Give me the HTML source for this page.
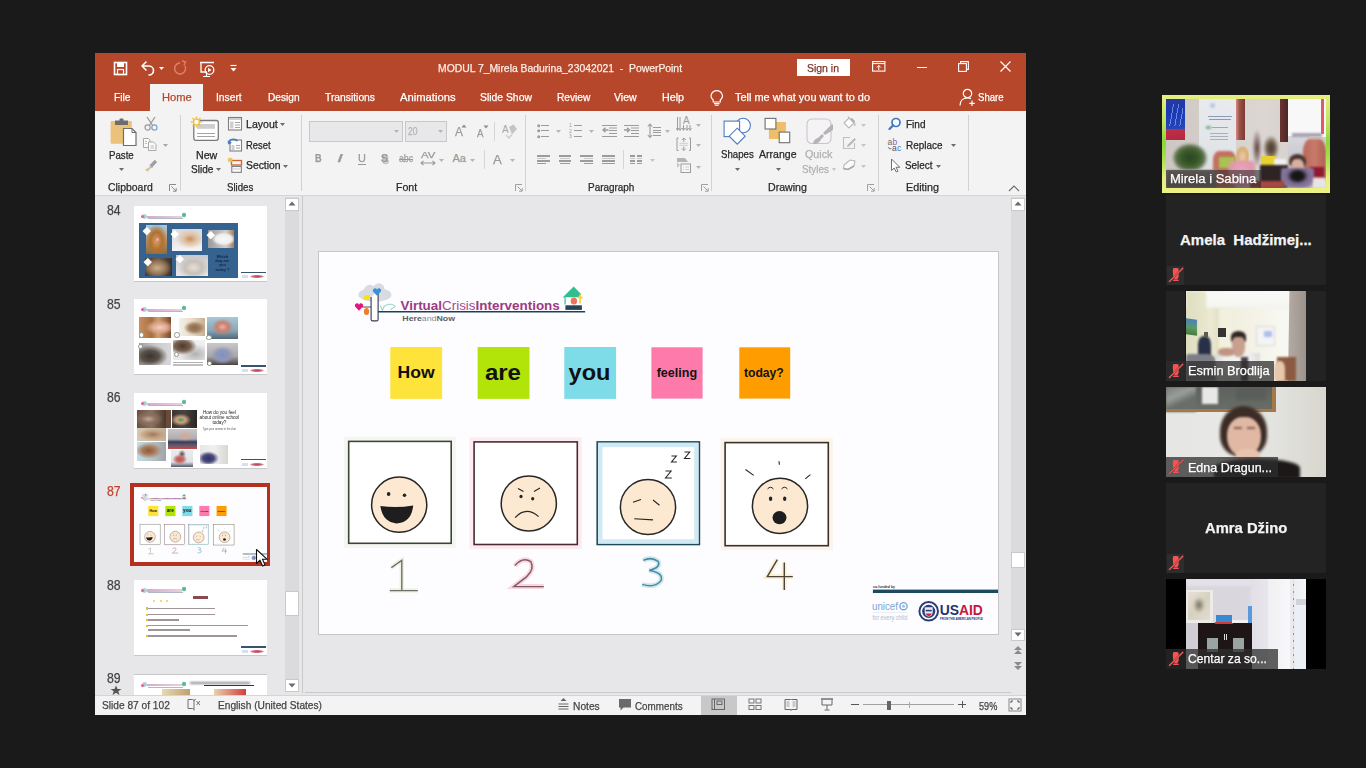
<!DOCTYPE html>
<html><head><meta charset="utf-8"><title>PowerPoint - Zoom</title>
<style>
html,body{margin:0;padding:0;width:1366px;height:768px;overflow:hidden;background:#1a1a1a;font-family:'Liberation Sans', sans-serif;}
[id^=t]{-webkit-text-stroke:0.25px currentColor;}
</style></head><body>
<div style="position:absolute;left:95px;top:53px;width:931px;height:58px;background:#b7472a;"></div>
<div style="position:absolute;left:95px;top:111px;width:931px;height:84px;background:#f3f3f3;"></div>
<div style="position:absolute;left:95px;top:195px;width:931px;height:1px;background:#d5d5d5;"></div>
<div style="position:absolute;left:95px;top:196px;width:931px;height:499px;background:#e7e6e9;"></div>
<div style="position:absolute;left:95px;top:695px;width:931px;height:20px;background:#f3f3f3;border-top:1px solid #d4d4d4;box-sizing:border-box;"></div>
<div style="position:absolute;left:150px;top:84px;width:53px;height:27px;background:#f3f3f3;"></div>
<svg style="position:absolute;left:112px;top:60px;" width="18" height="18" viewBox="0 0 18 18"><rect x="2.5" y="2.5" width="12" height="12" fill="none" stroke="#fff" stroke-width="1.6"/><rect x="5" y="2.5" width="7" height="4.5" fill="#fff"/><rect x="5.5" y="9.5" width="6" height="5" fill="none" stroke="#fff" stroke-width="1.2"/></svg>
<svg style="position:absolute;left:139px;top:59px;" width="28" height="18" viewBox="0 0 28 18"><path d="M3 7 L7 3 M3 7 L7 11 M3 7 H10 A4.5 4.5 0 0 1 10 16" fill="none" stroke="#fff" stroke-width="1.6" stroke-linecap="round" stroke-linejoin="round"/><path d="M20 8 L25 8 L22.5 11 Z" fill="#fff"/></svg>
<svg style="position:absolute;left:171px;top:59px;" width="18" height="18" viewBox="0 0 18 18"><path d="M9 4 A5.5 5.5 0 1 0 14 7" fill="none" stroke="#d9826a" stroke-width="1.5"/><path d="M11 2 L14.5 3 L13 6.5" fill="none" stroke="#d9826a" stroke-width="1.4"/></svg>
<svg style="position:absolute;left:198px;top:59px;" width="20" height="20" viewBox="0 0 20 20"><path d="M2 3.5 H16" stroke="#fff" stroke-width="1.5"/><path d="M3 4 V13 H9" fill="none" stroke="#fff" stroke-width="1.3"/><circle cx="11.5" cy="11" r="4.3" fill="none" stroke="#fff" stroke-width="1.3"/><path d="M10 8.8 L13.6 11 L10 13.2 Z" fill="#fff"/><path d="M5 17.5 H12 M8.5 13 V17" stroke="#fff" stroke-width="1.2"/></svg>
<svg style="position:absolute;left:229px;top:64px;" width="10" height="10" viewBox="0 0 10 10"><path d="M1.5 1.5 H7.5" stroke="#fff" stroke-width="1.2"/><path d="M1.5 4 H7.5 L4.5 7.5 Z" fill="#fff"/></svg>
<div id="t0" style="position:absolute;left:438px;top:62.65px;font:400 11px/1 'Liberation Sans', sans-serif;color:#fbeee9;white-space:nowrap;transform-origin:0 0;transform:scaleX(0.9427);">MODUL 7_Mirela Badurina_23042021&nbsp; -&nbsp; PowerPoint</div>
<svg style="position:absolute;left:872px;top:61px;" width="14" height="11" viewBox="0 0 14 11"><rect x="0.6" y="0.6" width="12.3" height="9.5" fill="none" stroke="#fff" stroke-width="1.1"/><path d="M0.6 2.6 H12.9" stroke="#fff" stroke-width="1"/><path d="M6.8 9 V4.5 M4.8 6.5 L6.8 4.5 L8.8 6.5" fill="none" stroke="#fff" stroke-width="1"/></svg>
<div style="position:absolute;left:917px;top:67px;width:10px;height:1.1px;background:#fff;"></div>
<svg style="position:absolute;left:958px;top:61px;" width="12" height="11" viewBox="0 0 12 11"><rect x="0.6" y="2.6" width="7.8" height="7.8" fill="none" stroke="#fff" stroke-width="1.1"/><path d="M2.6 2.6 V0.6 H10.4 V8.4 H8.4" fill="none" stroke="#fff" stroke-width="1.1"/></svg>
<svg style="position:absolute;left:1000px;top:61px;" width="11" height="11" viewBox="0 0 11 11"><path d="M0.5 0.5 L10.5 10.5 M10.5 0.5 L0.5 10.5" stroke="#fff" stroke-width="1.2"/></svg>
<div style="position:absolute;left:797px;top:58.6px;width:53px;height:17px;background:#fff;"></div>
<div id="t1" style="position:absolute;left:807.2px;top:62.65px;font:400 11px/1 'Liberation Sans', sans-serif;color:#7d3429;white-space:nowrap;transform-origin:0 0;transform:scaleX(0.9512);">Sign in</div>
<div id="t2" style="position:absolute;left:113.6px;top:92.05px;font:400 11px/1 'Liberation Sans', sans-serif;color:#fff;white-space:nowrap;transform-origin:0 0;transform:scaleX(0.9360);">File</div>
<div id="t3" style="position:absolute;left:161.6px;top:92.05px;font:400 11px/1 'Liberation Sans', sans-serif;color:#b7472a;white-space:nowrap;transform-origin:0 0;transform:scaleX(1.0155);">Home</div>
<div id="t4" style="position:absolute;left:216.3px;top:92.05px;font:400 11px/1 'Liberation Sans', sans-serif;color:#fff;white-space:nowrap;transform-origin:0 0;transform:scaleX(0.9340);">Insert</div>
<div id="t5" style="position:absolute;left:267.5px;top:92.05px;font:400 11px/1 'Liberation Sans', sans-serif;color:#fff;white-space:nowrap;transform-origin:0 0;transform:scaleX(0.9226);">Design</div>
<div id="t6" style="position:absolute;left:324.6px;top:92.05px;font:400 11px/1 'Liberation Sans', sans-serif;color:#fff;white-space:nowrap;transform-origin:0 0;transform:scaleX(0.9365);">Transitions</div>
<div id="t7" style="position:absolute;left:399.5px;top:92.05px;font:400 11px/1 'Liberation Sans', sans-serif;color:#fff;white-space:nowrap;transform-origin:0 0;transform:scaleX(1.0198);">Animations</div>
<div id="t8" style="position:absolute;left:479.7px;top:92.05px;font:400 11px/1 'Liberation Sans', sans-serif;color:#fff;white-space:nowrap;transform-origin:0 0;transform:scaleX(0.9428);">Slide Show</div>
<div id="t9" style="position:absolute;left:556.5px;top:92.05px;font:400 11px/1 'Liberation Sans', sans-serif;color:#fff;white-space:nowrap;transform-origin:0 0;transform:scaleX(0.9258);">Review</div>
<div id="t10" style="position:absolute;left:614px;top:92.05px;font:400 11px/1 'Liberation Sans', sans-serif;color:#fff;white-space:nowrap;transform-origin:0 0;transform:scaleX(0.9596);">View</div>
<div id="t11" style="position:absolute;left:661.7px;top:92.05px;font:400 11px/1 'Liberation Sans', sans-serif;color:#fff;white-space:nowrap;transform-origin:0 0;transform:scaleX(0.9768);">Help</div>
<div id="t12" style="position:absolute;left:735.2px;top:92.05px;font:400 11px/1 'Liberation Sans', sans-serif;color:#fff;white-space:nowrap;transform-origin:0 0;transform:scaleX(0.9945);">Tell me what you want to do</div>
<div id="t13" style="position:absolute;left:978.4px;top:92.05px;font:400 11px/1 'Liberation Sans', sans-serif;color:#fff;white-space:nowrap;transform-origin:0 0;transform:scaleX(0.8720);">Share</div>
<svg style="position:absolute;left:709px;top:89px;" width="16" height="18" viewBox="0 0 16 18"><path d="M4.2 11 C2 9 1.8 6.5 2.5 5 A5.8 5.8 0 0 1 13 5 C13.8 6.5 13.5 9 11.3 11 V13 H4.2 Z" fill="none" stroke="#fff" stroke-width="1.2"/><path d="M5 14.6 H10.5 M5.8 16.3 H9.7" stroke="#fff" stroke-width="1.1"/></svg>
<svg style="position:absolute;left:959px;top:88px;" width="17" height="19" viewBox="0 0 17 19"><circle cx="8.5" cy="5.5" r="4.2" fill="none" stroke="#fff" stroke-width="1.2"/><path d="M1 17.5 C1 12.5 4 10 8.5 10 C10 10 11 10.3 12 10.8" fill="none" stroke="#fff" stroke-width="1.2"/><path d="M13 12.5 V18 M10.3 15.3 H15.8" stroke="#fff" stroke-width="1.2"/></svg>
<svg style="position:absolute;left:109px;top:117px;" width="29" height="30" viewBox="0 0 29 30"><rect x="1.6" y="4" width="21.2" height="22.8" rx="1" fill="#eac27a"/><path d="M6 3.5 H19 V8 H6 Z" fill="#6d6d6d"/><rect x="10.5" y="1.5" width="4" height="3" rx="1" fill="#6d6d6d"/><path d="M14.5 11.5 H23 L27 15.5 V28.5 H14.5 Z" fill="#fff" stroke="#6f6f6f" stroke-width="1.2"/><path d="M23 11.5 V15.5 H27" fill="none" stroke="#6f6f6f" stroke-width="1"/></svg>
<div id="t14" style="position:absolute;left:109.1px;top:149.75px;font:400 11px/1 'Liberation Sans', sans-serif;color:#262626;white-space:nowrap;transform-origin:0 0;transform:scaleX(0.8777);">Paste</div>
<svg style="position:absolute;left:118.8px;top:168px;" width="5" height="3" viewBox="0 0 5 3"><path d="M0 0 H5 L2.5 3 Z" fill="#6b6b6b"/></svg>
<svg style="position:absolute;left:143px;top:116px;" width="16" height="15" viewBox="0 0 16 15"><path d="M4 1 L10 10 M12 1 L6 10" stroke="#9a9a9a" stroke-width="1.3"/><circle cx="4.6" cy="11.5" r="2.6" fill="none" stroke="#9a9a9a" stroke-width="1.2"/><circle cx="11.4" cy="11.5" r="2.6" fill="none" stroke="#7aa7cf" stroke-width="1.2"/></svg>
<svg style="position:absolute;left:142px;top:137px;" width="16" height="15" viewBox="0 0 16 15"><path d="M1.5 1.5 H6.5 L8 3 V10.5 H1.5 Z" fill="#fafafa" stroke="#a9a9a9" stroke-width="1"/><path d="M6.5 5 H11.5 L14 7.5 V13.5 H6.5 Z" fill="#fafafa" stroke="#a9a9a9" stroke-width="1"/><path d="M3 4.5 H5 M3 6.5 H5 M8.5 9 H12 M8.5 11 H12" stroke="#b4b4b4" stroke-width="0.9"/></svg>
<svg style="position:absolute;left:163.2px;top:144px;" width="5" height="3" viewBox="0 0 5 3"><path d="M0 0 H5 L2.5 3 Z" fill="#a8a8a8"/></svg>
<svg style="position:absolute;left:143px;top:158px;" width="16" height="15" viewBox="0 0 16 15"><path d="M8 8 L13 3" stroke="#9e9e9e" stroke-width="3.2"/><path d="M7.5 8.5 L2 11.5 L4.5 14 L8.3 9.5 Z" fill="#d8c4a0"/><path d="M7 7 L9.5 9.5" stroke="#a8a8b8" stroke-width="2"/></svg>
<div id="t15" style="position:absolute;left:107.8px;top:182.84px;font:400 10.3px/1 'Liberation Sans', sans-serif;color:#2a2a2a;white-space:nowrap;transform-origin:0 0;transform:scaleX(1.0141);">Clipboard</div>
<svg style="position:absolute;left:169px;top:184px;" width="8" height="8" viewBox="0 0 8 8"><path d="M0.5 7 V0.5 H7" fill="none" stroke="#8a8a8a" stroke-width="1"/><path d="M2.5 2.5 L7 7 M4 7.2 H7.2 V4" fill="none" stroke="#8a8a8a" stroke-width="1"/></svg>
<div style="position:absolute;left:180px;top:115px;width:1px;height:76px;background:#d2d2d2;"></div>
<svg style="position:absolute;left:190px;top:115px;" width="31" height="28" viewBox="0 0 31 28"><rect x="3.8" y="5.5" width="24.5" height="19.8" rx="2" fill="#fff" stroke="#7a7a7a" stroke-width="1.3"/><rect x="7" y="9" width="18" height="4.8" fill="#cfcfcf"/><path d="M7 18.5 H25 M7 21.5 H25" stroke="#9a9a9a" stroke-width="0.9"/><g transform="translate(6.5,7)"><circle r="3" fill="#fff" stroke="#f0c24a" stroke-width="1.6"/><path d="M0 -5.6 V-3.8 M0 3.8 V5.6 M-5.6 0 H-3.8 M3.8 0 H5.6 M-4 -4 L-2.8 -2.8 M2.8 2.8 L4 4 M4 -4 L2.8 -2.8 M-2.8 2.8 L-4 4" stroke="#f0c24a" stroke-width="1.4"/></g></svg>
<div id="t16" style="position:absolute;left:195.7px;top:149.75px;font:400 11px/1 'Liberation Sans', sans-serif;color:#262626;white-space:nowrap;transform-origin:0 0;transform:scaleX(0.9675);">New</div>
<div id="t17" style="position:absolute;left:190.6px;top:164.35px;font:400 11px/1 'Liberation Sans', sans-serif;color:#262626;white-space:nowrap;transform-origin:0 0;transform:scaleX(0.9114);">Slide</div>
<svg style="position:absolute;left:216.2px;top:168.2px;" width="5" height="3" viewBox="0 0 5 3"><path d="M0 0 H5 L2.5 3 Z" fill="#6b6b6b"/></svg>
<svg style="position:absolute;left:227px;top:116px;" width="16" height="15" viewBox="0 0 16 15"><rect x="1.5" y="1.5" width="13" height="12.5" fill="#fff" stroke="#7e7e7e" stroke-width="1.1"/><rect x="2" y="2" width="12" height="2" fill="#cfcfcf"/><rect x="3" y="5.5" width="3.5" height="7" fill="#cfcfcf"/><path d="M8 6.5 H13 M8 9 H13 M8 11.5 H13" stroke="#9a9a9a" stroke-width="0.9"/></svg>
<div id="t18" style="position:absolute;left:245.8px;top:118.95px;font:400 11px/1 'Liberation Sans', sans-serif;color:#262626;white-space:nowrap;transform-origin:0 0;transform:scaleX(0.9627);">Layout</div>
<svg style="position:absolute;left:280.4px;top:123px;" width="5" height="3" viewBox="0 0 5 3"><path d="M0 0 H5 L2.5 3 Z" fill="#6b6b6b"/></svg>
<svg style="position:absolute;left:227px;top:137px;" width="16" height="15" viewBox="0 0 16 15"><rect x="3" y="3" width="11.5" height="11" fill="#fff" stroke="#7e7e7e" stroke-width="1.1"/><rect x="4.5" y="8" width="3" height="5" fill="#cfcfcf"/><path d="M9 8.5 H13 M9 11 H13" stroke="#9a9a9a" stroke-width="0.9"/><path d="M1.5 6.5 A5 4.5 0 0 1 10.5 4" fill="none" stroke="#3c7ac4" stroke-width="1.5"/><path d="M0.5 3.5 L1.5 7.5 L5 5.8 Z" fill="#3c7ac4"/></svg>
<div id="t19" style="position:absolute;left:245.8px;top:140.05px;font:400 11px/1 'Liberation Sans', sans-serif;color:#262626;white-space:nowrap;transform-origin:0 0;transform:scaleX(0.8522);">Reset</div>
<svg style="position:absolute;left:227px;top:157px;" width="16" height="16" viewBox="0 0 16 16"><rect x="4.5" y="3.5" width="10" height="4.5" fill="none" stroke="#c9652f" stroke-width="1.3"/><rect x="4.8" y="9.5" width="9.5" height="5.8" fill="#fff" stroke="#7e7e7e" stroke-width="1.1"/><path d="M6 12 H13" stroke="#bdbdbd" stroke-width="0.9"/><g transform="translate(3.2,3)"><path d="M0 -2.6 V2.6 M-2.6 0 H2.6 M-1.9 -1.9 L1.9 1.9 M1.9 -1.9 L-1.9 1.9" stroke="#f0c24a" stroke-width="1.1"/></g></svg>
<div id="t20" style="position:absolute;left:245.6px;top:160.45px;font:400 11px/1 'Liberation Sans', sans-serif;color:#262626;white-space:nowrap;transform-origin:0 0;transform:scaleX(0.9427);">Section</div>
<svg style="position:absolute;left:283px;top:165.1px;" width="5" height="3" viewBox="0 0 5 3"><path d="M0 0 H5 L2.5 3 Z" fill="#6b6b6b"/></svg>
<div id="t21" style="position:absolute;left:227px;top:182.84px;font:400 10.3px/1 'Liberation Sans', sans-serif;color:#2a2a2a;white-space:nowrap;transform-origin:0 0;transform:scaleX(0.9377);">Slides</div>
<div style="position:absolute;left:301px;top:115px;width:1px;height:76px;background:#d2d2d2;"></div>
<div style="position:absolute;left:309.2px;top:121.2px;width:93.6px;height:20.5px;background:#e8e8ea;border:1px solid #c8c8c8;box-sizing:border-box;"></div>
<svg style="position:absolute;left:394px;top:130px;" width="5" height="3" viewBox="0 0 5 3"><path d="M0 0 H5 L2.5 3 Z" fill="#b5b5b5"/></svg>
<div style="position:absolute;left:405.2px;top:121.2px;width:41.6px;height:20.5px;background:#e8e8ea;border:1px solid #c8c8c8;box-sizing:border-box;"></div>
<div id="t22" style="position:absolute;left:408px;top:126.03px;font:400 11.5px/1 'Liberation Sans', sans-serif;color:#b3b3b3;white-space:nowrap;transform-origin:0 0;transform:scaleX(0.7424);">20</div>
<svg style="position:absolute;left:438.2px;top:130px;" width="5" height="3" viewBox="0 0 5 3"><path d="M0 0 H5 L2.5 3 Z" fill="#b5b5b5"/></svg>
<div id="t23" style="position:absolute;left:454.6px;top:126.28px;font:400 12.5px/1 'Liberation Sans', sans-serif;color:#9a9a9a;white-space:nowrap;transform-origin:0 0;transform:scaleX(0.9588);">A</div>
<svg style="position:absolute;left:461px;top:124px;" width="6" height="4" viewBox="0 0 6 4"><path d="M0.5 3.5 H5.5 L3 0.5 Z" fill="#8a8a8a"/></svg>
<div id="t24" style="position:absolute;left:477.1px;top:127.98px;font:400 10.5px/1 'Liberation Sans', sans-serif;color:#9a9a9a;white-space:nowrap;transform-origin:0 0;transform:scaleX(0.9265);">A</div>
<svg style="position:absolute;left:483px;top:125px;" width="6" height="4" viewBox="0 0 6 4"><path d="M0.5 0.5 H5.5 L3 3.5 Z" fill="#8a8a8a"/></svg>
<div style="position:absolute;left:494px;top:122px;width:1px;height:19px;background:#d6d6d6;"></div>
<svg style="position:absolute;left:502px;top:123px;" width="16" height="17" viewBox="0 0 16 17"><text x="0" y="10" font-family="Liberation Sans" font-size="10" fill="#a6a6a6">A</text><path d="M7 4 L11.5 1.5 L15 6 L10 11.5 Z" fill="#c4c4c4"/><path d="M4 12 L7 15 L10 11.5" fill="none" stroke="#d0d0d0" stroke-width="1.6"/></svg>
<div id="t25" style="position:absolute;left:314.5px;top:153.45px;font:700 11px/1 'Liberation Sans', sans-serif;color:#9a9a9a;white-space:nowrap;transform-origin:0 0;transform:scaleX(0.8299);">B</div>
<div id="t26" style="position:absolute;left:336.9px;top:153.45px;font:400 11px/1 'Liberation Sans', sans-serif;color:#9a9a9a;white-space:nowrap;transform-origin:0 0;font-style:italic;transform:scaleX(1.9592);">I</div>
<div id="t27" style="position:absolute;left:358px;top:153.45px;font:400 11px/1 'Liberation Sans', sans-serif;color:#9a9a9a;white-space:nowrap;transform-origin:0 0;transform:scaleX(0.9933);">U</div>
<div style="position:absolute;left:358px;top:164px;width:8px;height:1.2px;background:#9a9a9a;"></div>
<div id="t28" style="position:absolute;left:381.6px;top:155.45px;font:700 11px/1 'Liberation Sans', sans-serif;color:#c4c4c4;white-space:nowrap;transform-origin:0 0;transform:scaleX(0.9804);">S</div>
<div id="t29" style="position:absolute;left:380.6px;top:153.45px;font:700 11px/1 'Liberation Sans', sans-serif;color:#9a9a9a;white-space:nowrap;transform-origin:0 0;transform:scaleX(0.9804);">S</div>
<div id="t30" style="position:absolute;left:398.8px;top:154.30px;font:400 10px/1 'Liberation Sans', sans-serif;color:#a0a0a0;white-space:nowrap;transform-origin:0 0;transform:scaleX(0.8744);">abc</div>
<div style="position:absolute;left:398.5px;top:159px;width:14.5px;height:1px;background:#9a9a9a;"></div>
<div id="t31" style="position:absolute;left:420.7px;top:150.85px;font:400 9px/1 'Liberation Sans', sans-serif;color:#9a9a9a;white-space:nowrap;transform-origin:0 0;transform:scaleX(1.2606);">AV</div>
<svg style="position:absolute;left:420px;top:160px;" width="16" height="6" viewBox="0 0 16 6"><path d="M1 3 H15 M3.5 0.8 L1 3 L3.5 5.2 M12.5 0.8 L15 3 L12.5 5.2" fill="none" stroke="#9a9a9a" stroke-width="1.1"/></svg>
<svg style="position:absolute;left:438.8px;top:158.5px;" width="5" height="3" viewBox="0 0 5 3"><path d="M0 0 H5 L2.5 3 Z" fill="#b5b5b5"/></svg>
<div id="t32" style="position:absolute;left:452.5px;top:153.45px;font:400 11px/1 'Liberation Sans', sans-serif;color:#9a9a9a;white-space:nowrap;transform-origin:0 0;">Aa</div>
<svg style="position:absolute;left:470.1px;top:158.5px;" width="5" height="3" viewBox="0 0 5 3"><path d="M0 0 H5 L2.5 3 Z" fill="#b5b5b5"/></svg>
<div style="position:absolute;left:483.6px;top:150.2px;width:1px;height:19px;background:#d6d6d6;"></div>
<div id="t33" style="position:absolute;left:493.3px;top:152.65px;font:400 13px/1 'Liberation Sans', sans-serif;color:#9a9a9a;white-space:nowrap;transform-origin:0 0;transform:scaleX(1.0148);">A</div>
<svg style="position:absolute;left:510.1px;top:158.5px;" width="5" height="3" viewBox="0 0 5 3"><path d="M0 0 H5 L2.5 3 Z" fill="#b5b5b5"/></svg>
<div id="t34" style="position:absolute;left:395.6px;top:182.84px;font:400 10.3px/1 'Liberation Sans', sans-serif;color:#2a2a2a;white-space:nowrap;transform-origin:0 0;transform:scaleX(1.0287);">Font</div>
<svg style="position:absolute;left:515px;top:183.5px;" width="8" height="8" viewBox="0 0 8 8"><path d="M0.5 7 V0.5 H7" fill="none" stroke="#a0a0a0" stroke-width="1"/><path d="M2.5 2.5 L7 7 M4 7.2 H7.2 V4" fill="none" stroke="#a0a0a0" stroke-width="1"/></svg>
<div style="position:absolute;left:525.3px;top:115px;width:1px;height:76px;background:#d2d2d2;"></div>
<svg style="position:absolute;left:536.8px;top:123.6px;" width="4" height="4" viewBox="0 0 4 4"><circle cx="1.7" cy="1.7" r="1.5" fill="#9c9c9c"/></svg>
<div style="position:absolute;left:541.3px;top:124.7px;width:7.6px;height:1.2px;background:#9c9c9c;"></div>
<svg style="position:absolute;left:536.8px;top:128.8px;" width="4" height="4" viewBox="0 0 4 4"><circle cx="1.7" cy="1.7" r="1.5" fill="#9c9c9c"/></svg>
<div style="position:absolute;left:541.3px;top:129.9px;width:7.6px;height:1.2px;background:#9c9c9c;"></div>
<svg style="position:absolute;left:536.8px;top:134.8px;" width="4" height="4" viewBox="0 0 4 4"><circle cx="1.7" cy="1.7" r="1.5" fill="#9c9c9c"/></svg>
<div style="position:absolute;left:541.3px;top:135.9px;width:7.6px;height:1.2px;background:#9c9c9c;"></div>
<svg style="position:absolute;left:556.2px;top:130px;" width="5" height="3" viewBox="0 0 5 3"><path d="M0 0 H5 L2.5 3 Z" fill="#b5b5b5"/></svg>
<svg style="position:absolute;left:569px;top:122px;" width="4" height="17" viewBox="0 0 4 17"><text x="0" y="5" font-family="Liberation Sans" font-size="5" fill="#9c9c9c">1</text><text x="0" y="10.5" font-family="Liberation Sans" font-size="5" fill="#9c9c9c">2</text><text x="0" y="16" font-family="Liberation Sans" font-size="5" fill="#9c9c9c">3</text></svg>
<div style="position:absolute;left:574.1px;top:124.7px;width:7.9px;height:1.2px;background:#9c9c9c;"></div>
<div style="position:absolute;left:574.1px;top:129.9px;width:7.9px;height:1.2px;background:#9c9c9c;"></div>
<div style="position:absolute;left:574.1px;top:135.9px;width:7.9px;height:1.2px;background:#9c9c9c;"></div>
<svg style="position:absolute;left:589px;top:130px;" width="5" height="3" viewBox="0 0 5 3"><path d="M0 0 H5 L2.5 3 Z" fill="#b5b5b5"/></svg>
<div style="position:absolute;left:602.3px;top:124.7px;width:14.6px;height:1.2px;background:#9c9c9c;"></div>
<div style="position:absolute;left:602.3px;top:135.9px;width:14.6px;height:1.2px;background:#9c9c9c;"></div>
<div style="position:absolute;left:609.3px;top:127.4px;width:7.6px;height:1.2px;background:#c9c9c9;"></div>
<div style="position:absolute;left:609.3px;top:129.9px;width:7.6px;height:1.2px;background:#9c9c9c;"></div>
<div style="position:absolute;left:609.3px;top:132.8px;width:7.6px;height:1.2px;background:#9c9c9c;"></div>
<svg style="position:absolute;left:602.3px;top:127px;" width="7" height="6" viewBox="0 0 7 6"><path d="M6.5 3 H1.5 M3.5 0.8 L1 3 L3.5 5.2" fill="none" stroke="#9c9c9c" stroke-width="1.5"/></svg>
<div style="position:absolute;left:624px;top:124.7px;width:14.6px;height:1.2px;background:#9c9c9c;"></div>
<div style="position:absolute;left:624px;top:135.9px;width:14.6px;height:1.2px;background:#9c9c9c;"></div>
<div style="position:absolute;left:631px;top:127.4px;width:7.6px;height:1.2px;background:#c9c9c9;"></div>
<div style="position:absolute;left:631px;top:129.9px;width:7.6px;height:1.2px;background:#9c9c9c;"></div>
<div style="position:absolute;left:631px;top:132.8px;width:7.6px;height:1.2px;background:#9c9c9c;"></div>
<svg style="position:absolute;left:624px;top:127px;" width="7" height="6" viewBox="0 0 7 6"><path d="M0 3 H5 M3 0.8 L5.5 3 L3 5.2" fill="none" stroke="#9c9c9c" stroke-width="1.5"/></svg>
<svg style="position:absolute;left:647px;top:123px;" width="8" height="16" viewBox="0 0 8 16"><path d="M3 1 V14.5 M0.8 3.5 L3 1 L5.2 3.5 M0.8 12 L3 14.5 L5.2 12" fill="none" stroke="#9c9c9c" stroke-width="1.1"/></svg>
<div style="position:absolute;left:653px;top:127px;width:8px;height:1.1px;background:#9c9c9c;"></div>
<div style="position:absolute;left:653px;top:129.5px;width:8px;height:1.1px;background:#9c9c9c;"></div>
<div style="position:absolute;left:653px;top:132px;width:8px;height:1.1px;background:#9c9c9c;"></div>
<div style="position:absolute;left:653px;top:135px;width:8px;height:1.1px;background:#9c9c9c;"></div>
<svg style="position:absolute;left:665.4px;top:130px;" width="5" height="3" viewBox="0 0 5 3"><path d="M0 0 H5 L2.5 3 Z" fill="#b5b5b5"/></svg>
<svg style="position:absolute;left:676px;top:116px;" width="16" height="16" viewBox="0 0 16 16"><path d="M1.5 1 V14 M4 1 V14 M7.5 9 V14 M11 9 V14 M14 9 V14" stroke="#9c9c9c" stroke-width="1"/><path d="M0 12 L1.5 14.5 L3 12 M2.5 12 L4 14.5 L5.5 12 M6 12 L7.5 14.5 L9 12 M9.5 12 L11 14.5 L12.5 12 M12.5 12 L14 14.5 L15.5 12" fill="none" stroke="#9c9c9c" stroke-width="0.9"/><text x="7" y="8.3" font-family="Liberation Sans" font-size="10" fill="#9c9c9c">A</text></svg>
<svg style="position:absolute;left:695.5px;top:124px;" width="5" height="3" viewBox="0 0 5 3"><path d="M0 0 H5 L2.5 3 Z" fill="#b5b5b5"/></svg>
<svg style="position:absolute;left:676px;top:137px;" width="16" height="15" viewBox="0 0 16 15"><path d="M2.5 1 H1 V13.5 H2.5 M13 1 H14.5 V13.5 H13" fill="none" stroke="#9c9c9c" stroke-width="1"/><path d="M7.8 1 V5 M5.8 3 L7.8 1 L9.8 3 M7.8 13.5 V9.5 M5.8 11.5 L7.8 13.5 L9.8 11.5" fill="none" stroke="#9c9c9c" stroke-width="1"/><path d="M3.5 6.3 H12 M3.5 8.3 H12" stroke="#c9c9c9" stroke-width="0.9"/></svg>
<svg style="position:absolute;left:695.5px;top:144px;" width="5" height="3" viewBox="0 0 5 3"><path d="M0 0 H5 L2.5 3 Z" fill="#b5b5b5"/></svg>
<svg style="position:absolute;left:676px;top:157px;" width="16" height="17" viewBox="0 0 16 17"><path d="M1 1 H9 L12 5 H1 Z" fill="#b6b2b8"/><path d="M1 5 L4 8 L1 11 Z" fill="#c9c6cb"/><rect x="5" y="7" width="9.5" height="8.5" fill="#f7f5f8" stroke="#9c9c9c" stroke-width="1"/><path d="M7 10 H8 M9.5 10 H13 M7 12.5 H8 M9.5 12.5 H13" stroke="#c9c9c9" stroke-width="0.9"/></svg>
<svg style="position:absolute;left:695.5px;top:165.5px;" width="5" height="3" viewBox="0 0 5 3"><path d="M0 0 H5 L2.5 3 Z" fill="#b5b5b5"/></svg>
<div style="position:absolute;left:537.1px;top:155.4px;width:12.6px;height:1.2px;background:#9c9c9c;"></div>
<div style="position:absolute;left:537.1px;top:157.9px;width:9px;height:1.2px;background:#c9c9c9;"></div>
<div style="position:absolute;left:537.1px;top:160.4px;width:12.6px;height:1.2px;background:#9c9c9c;"></div>
<div style="position:absolute;left:537.1px;top:163.3px;width:9px;height:1.2px;background:#9c9c9c;"></div>
<div style="position:absolute;left:558.8px;top:155.4px;width:12.6px;height:1.2px;background:#9c9c9c;"></div>
<div style="position:absolute;left:560.0px;top:157.9px;width:10px;height:1.2px;background:#c9c9c9;"></div>
<div style="position:absolute;left:558.8px;top:160.4px;width:12.6px;height:1.2px;background:#9c9c9c;"></div>
<div style="position:absolute;left:560.3px;top:163.3px;width:9.5px;height:1.2px;background:#9c9c9c;"></div>
<div style="position:absolute;left:580.4px;top:155.4px;width:12.6px;height:1.2px;background:#9c9c9c;"></div>
<div style="position:absolute;left:584.0px;top:157.9px;width:9px;height:1.2px;background:#c9c9c9;"></div>
<div style="position:absolute;left:580.4px;top:160.4px;width:12.6px;height:1.2px;background:#9c9c9c;"></div>
<div style="position:absolute;left:584.0px;top:163.3px;width:9px;height:1.2px;background:#9c9c9c;"></div>
<div style="position:absolute;left:602.1px;top:155.4px;width:12.6px;height:1.2px;background:#9c9c9c;"></div>
<div style="position:absolute;left:602.1px;top:157.9px;width:12.6px;height:1.2px;background:#c9c9c9;"></div>
<div style="position:absolute;left:602.1px;top:160.4px;width:12.6px;height:1.2px;background:#9c9c9c;"></div>
<div style="position:absolute;left:602.1px;top:163.3px;width:12.6px;height:1.2px;background:#9c9c9c;"></div>
<div style="position:absolute;left:622.5px;top:150px;width:1px;height:19px;background:#d6d6d6;"></div>
<div style="position:absolute;left:630.4px;top:155.4px;width:5px;height:1.2px;background:#9c9c9c;"></div>
<div style="position:absolute;left:630.4px;top:157.9px;width:5px;height:1.2px;background:#c9c9c9;"></div>
<div style="position:absolute;left:630.4px;top:160.4px;width:5px;height:1.2px;background:#9c9c9c;"></div>
<div style="position:absolute;left:630.4px;top:163.3px;width:5px;height:1.2px;background:#9c9c9c;"></div>
<div style="position:absolute;left:637.2px;top:155.4px;width:5px;height:1.2px;background:#9c9c9c;"></div>
<div style="position:absolute;left:637.2px;top:157.9px;width:5px;height:1.2px;background:#c9c9c9;"></div>
<div style="position:absolute;left:637.2px;top:160.4px;width:5px;height:1.2px;background:#9c9c9c;"></div>
<div style="position:absolute;left:637.2px;top:163.3px;width:5px;height:1.2px;background:#9c9c9c;"></div>
<svg style="position:absolute;left:649.5px;top:158.5px;" width="5" height="3" viewBox="0 0 5 3"><path d="M0 0 H5 L2.5 3 Z" fill="#c5c5c5"/></svg>
<div id="t35" style="position:absolute;left:587.8px;top:182.84px;font:400 10.3px/1 'Liberation Sans', sans-serif;color:#2a2a2a;white-space:nowrap;transform-origin:0 0;transform:scaleX(0.9648);">Paragraph</div>
<svg style="position:absolute;left:700.6px;top:183.5px;" width="8" height="8" viewBox="0 0 8 8"><path d="M0.5 7 V0.5 H7" fill="none" stroke="#a0a0a0" stroke-width="1"/><path d="M2.5 2.5 L7 7 M4 7.2 H7.2 V4" fill="none" stroke="#a0a0a0" stroke-width="1"/></svg>
<div style="position:absolute;left:710.6px;top:115px;width:1px;height:76px;background:#d2d2d2;"></div>
<svg style="position:absolute;left:722px;top:115px;" width="31" height="31" viewBox="0 0 31 31"><circle cx="21.1" cy="10.5" r="7.3" fill="#fff" stroke="#4b7cc0" stroke-width="1.1"/><rect x="2.1" y="6.1" width="15.5" height="15.5" fill="#fff" stroke="#4b7cc0" stroke-width="1.1"/><path d="M15.2 13.2 L23.2 21.2 L15.2 29.2 L7.2 21.2 Z" fill="#fff" stroke="#4b7cc0" stroke-width="1.1"/></svg>
<div id="t36" style="position:absolute;left:720.9px;top:149.45px;font:400 11px/1 'Liberation Sans', sans-serif;color:#262626;white-space:nowrap;transform-origin:0 0;transform:scaleX(0.8764);">Shapes</div>
<svg style="position:absolute;left:735.2px;top:168.2px;" width="5" height="3" viewBox="0 0 5 3"><path d="M0 0 H5 L2.5 3 Z" fill="#6b6b6b"/></svg>
<svg style="position:absolute;left:763px;top:116px;" width="30" height="30" viewBox="0 0 30 30"><rect x="5.9" y="6" width="17" height="17" fill="#efbe6a"/><rect x="2.1" y="2.4" width="10.8" height="10.6" fill="#fff" stroke="#6f6f6f" stroke-width="1.1"/><rect x="16.2" y="16.1" width="10.5" height="10.6" fill="#fff" stroke="#6f6f6f" stroke-width="1.1"/></svg>
<div id="t37" style="position:absolute;left:759.3px;top:149.45px;font:400 11px/1 'Liberation Sans', sans-serif;color:#262626;white-space:nowrap;transform-origin:0 0;transform:scaleX(0.9581);">Arrange</div>
<svg style="position:absolute;left:776.2px;top:168.2px;" width="5" height="3" viewBox="0 0 5 3"><path d="M0 0 H5 L2.5 3 Z" fill="#6b6b6b"/></svg>
<svg style="position:absolute;left:805px;top:117px;" width="30" height="30" viewBox="0 0 30 30"><rect x="2" y="2" width="24" height="24.5" rx="5" fill="#f5f3f6" stroke="#c8c5ca" stroke-width="1.1"/><path d="M8 27 C8.5 23 11 21.5 13 21 L17 17 L19 19 L15.5 23 C15 25 12 27 8 27 Z" fill="#b5b3b6"/><path d="M18 16 L27 7 L28 8 V13 L20 18 Z" fill="#b5b3b6"/></svg>
<div id="t38" style="position:absolute;left:805.2px;top:149.45px;font:400 11px/1 'Liberation Sans', sans-serif;color:#b0b0b0;white-space:nowrap;transform-origin:0 0;transform:scaleX(0.9778);">Quick</div>
<div id="t39" style="position:absolute;left:801.7px;top:164.35px;font:400 11px/1 'Liberation Sans', sans-serif;color:#b0b0b0;white-space:nowrap;transform-origin:0 0;transform:scaleX(0.8976);">Styles</div>
<svg style="position:absolute;left:832px;top:168px;" width="4" height="3" viewBox="0 0 4 3"><path d="M0 0 H4 L2.0 3 Z" fill="#c5c5c5"/></svg>
<svg style="position:absolute;left:842px;top:116px;" width="15" height="14" viewBox="0 0 15 14"><path d="M2 7 L7 2 L12 7 L7 12 Z" fill="#fff" stroke="#b8b8b8" stroke-width="1.1"/><path d="M7 2 L6 0.5 M11 5 L13 8 L12.5 10" fill="none" stroke="#b8b8b8" stroke-width="1.2"/><path d="M9 2.5 L12.5 6" stroke="#b0b0b0" stroke-width="2"/></svg>
<svg style="position:absolute;left:861px;top:123.5px;" width="5" height="3" viewBox="0 0 5 3"><path d="M0 0 H5 L2.5 3 Z" fill="#c5c5c5"/></svg>
<svg style="position:absolute;left:842px;top:136px;" width="15" height="14" viewBox="0 0 15 14"><path d="M8 1.5 H1.5 V12.5 H12.5 V7" fill="none" stroke="#c0c0c0" stroke-width="1.1"/><path d="M5.5 9 L12.5 2 L14 3.5 L7 10.5 L5 11 Z" fill="#b8b8b8"/></svg>
<svg style="position:absolute;left:861px;top:144px;" width="5" height="3" viewBox="0 0 5 3"><path d="M0 0 H5 L2.5 3 Z" fill="#c5c5c5"/></svg>
<svg style="position:absolute;left:842px;top:157px;" width="15" height="14" viewBox="0 0 15 14"><path d="M2 8 L8 3 L13 4 L12 9 L6 12.5 L1.5 11.5 Z" fill="#fafafa" stroke="#b8b8b8" stroke-width="1.1"/><path d="M1.5 11.5 L6 12.5 L12 9" fill="none" stroke="#a8a8a8" stroke-width="1.6"/></svg>
<svg style="position:absolute;left:861px;top:165px;" width="5" height="3" viewBox="0 0 5 3"><path d="M0 0 H5 L2.5 3 Z" fill="#c5c5c5"/></svg>
<div id="t40" style="position:absolute;left:767.6px;top:182.84px;font:400 10.3px/1 'Liberation Sans', sans-serif;color:#2a2a2a;white-space:nowrap;transform-origin:0 0;transform:scaleX(1.0296);">Drawing</div>
<svg style="position:absolute;left:867px;top:183.5px;" width="8" height="8" viewBox="0 0 8 8"><path d="M0.5 7 V0.5 H7" fill="none" stroke="#a0a0a0" stroke-width="1"/><path d="M2.5 2.5 L7 7 M4 7.2 H7.2 V4" fill="none" stroke="#a0a0a0" stroke-width="1"/></svg>
<div style="position:absolute;left:877.8px;top:115px;width:1px;height:76px;background:#d2d2d2;"></div>
<svg style="position:absolute;left:888px;top:117px;" width="14" height="14" viewBox="0 0 14 14"><circle cx="8" cy="5.5" r="4" fill="#fff" stroke="#3b78c0" stroke-width="1.7"/><path d="M5.2 8.3 L1.5 12" stroke="#3b78c0" stroke-width="2.2" stroke-linecap="round"/></svg>
<div id="t41" style="position:absolute;left:905.6px;top:118.95px;font:400 11px/1 'Liberation Sans', sans-serif;color:#262626;white-space:nowrap;transform-origin:0 0;transform:scaleX(0.9109);">Find</div>
<svg style="position:absolute;left:887px;top:136px;" width="16" height="17" viewBox="0 0 16 17"><text x="0.5" y="8.5" font-family="Liberation Sans" font-size="8.5" fill="#6a6a6a">a</text><text x="5.6" y="8.5" font-family="Liberation Sans" font-size="8.5" fill="#9a5bb5">b</text><text x="5" y="15" font-family="Liberation Sans" font-size="8.5" fill="#555">a</text><text x="10" y="15" font-family="Liberation Sans" font-size="8.5" fill="#3b78c0">c</text><path d="M1.5 11 L2.5 13 L4.5 12.5" fill="none" stroke="#3b78c0" stroke-width="0.9"/></svg>
<div id="t42" style="position:absolute;left:905.6px;top:139.75px;font:400 11px/1 'Liberation Sans', sans-serif;color:#262626;white-space:nowrap;transform-origin:0 0;transform:scaleX(0.9019);">Replace</div>
<svg style="position:absolute;left:950.9px;top:144.2px;" width="5" height="3" viewBox="0 0 5 3"><path d="M0 0 H5 L2.5 3 Z" fill="#6b6b6b"/></svg>
<svg style="position:absolute;left:890px;top:158px;" width="11" height="15" viewBox="0 0 11 15"><path d="M1.5 1 V12.5 L4.2 10 L6.3 14 L8 13.2 L6 9.3 H9.8 Z" fill="#fff" stroke="#6f6f6f" stroke-width="1" stroke-linejoin="round"/></svg>
<div id="t43" style="position:absolute;left:905.3px;top:160.35px;font:400 11px/1 'Liberation Sans', sans-serif;color:#262626;white-space:nowrap;transform-origin:0 0;transform:scaleX(0.8993);">Select</div>
<svg style="position:absolute;left:936.2px;top:165.1px;" width="5" height="3" viewBox="0 0 5 3"><path d="M0 0 H5 L2.5 3 Z" fill="#6b6b6b"/></svg>
<div id="t44" style="position:absolute;left:906.4px;top:182.84px;font:400 10.3px/1 'Liberation Sans', sans-serif;color:#2a2a2a;white-space:nowrap;transform-origin:0 0;transform:scaleX(1.0450);">Editing</div>
<div style="position:absolute;left:967.5px;top:115px;width:1px;height:76px;background:#d2d2d2;"></div>
<svg style="position:absolute;left:1008px;top:185px;" width="12" height="7" viewBox="0 0 12 7"><path d="M1 6 L6 1 L11 6" fill="none" stroke="#6a6a6a" stroke-width="1.1"/></svg>
<div style="position:absolute;left:302px;top:196px;width:1px;height:497px;background:#c9c9cc;"></div>
<div style="position:absolute;left:305px;top:692px;width:706px;height:1px;background:#c9c9cc;"></div>
<div style="position:absolute;left:285px;top:197px;width:14px;height:495px;background:#dbdadd;"></div>
<div style="position:absolute;left:285px;top:197.5px;width:14px;height:13.5px;background:#fff;border:1px solid #c9c9cc;box-sizing:border-box;"></div>
<svg style="position:absolute;left:288px;top:201px;" width="8" height="5" viewBox="0 0 8 5"><path d="M0.5 4.5 H7.5 L4 0.5 Z" fill="#6a6a6a"/></svg>
<div style="position:absolute;left:285px;top:678.5px;width:14px;height:13.5px;background:#fff;border:1px solid #c9c9cc;box-sizing:border-box;"></div>
<svg style="position:absolute;left:288px;top:683px;" width="8" height="5" viewBox="0 0 8 5"><path d="M0.5 0.5 H7.5 L4 4.5 Z" fill="#6a6a6a"/></svg>
<div style="position:absolute;left:285px;top:591px;width:14px;height:25px;background:#fff;border:1px solid #c9c9cc;box-sizing:border-box;"></div>
<div style="position:absolute;left:1011px;top:197px;width:14px;height:444px;background:#dbdadd;"></div>
<div style="position:absolute;left:1011px;top:197.5px;width:14px;height:13.5px;background:#fff;border:1px solid #c9c9cc;box-sizing:border-box;"></div>
<svg style="position:absolute;left:1014px;top:201px;" width="8" height="5" viewBox="0 0 8 5"><path d="M0.5 4.5 H7.5 L4 0.5 Z" fill="#6a6a6a"/></svg>
<div style="position:absolute;left:1011px;top:628.5px;width:14px;height:12px;background:#fff;border:1px solid #c9c9cc;box-sizing:border-box;"></div>
<svg style="position:absolute;left:1014px;top:632px;" width="8" height="5" viewBox="0 0 8 5"><path d="M0.5 0.5 H7.5 L4 4.5 Z" fill="#6a6a6a"/></svg>
<div style="position:absolute;left:1011px;top:552px;width:14px;height:16px;background:#fff;border:1px solid #c9c9cc;box-sizing:border-box;"></div>
<svg style="position:absolute;left:1013px;top:645px;" width="10" height="10" viewBox="0 0 10 10"><path d="M1 5 H9 L5 1 Z M1 9 H9 L5 5 Z" fill="#8a8a8a"/></svg>
<svg style="position:absolute;left:1013px;top:660.5px;" width="10" height="10" viewBox="0 0 10 10"><path d="M1 1 H9 L5 5 Z M1 5 H9 L5 9 Z" fill="#8a8a8a"/></svg>
<svg style="position:absolute;left:318px;top:251px" width="680" height="383" viewBox="0 0 680 383"><rect x="0" y="0" width="680" height="383" fill="#fdfcfe"/><g fill="#d9dbe2"><ellipse cx="56.9" cy="43.7" rx="16.5" ry="7"/><circle cx="51.9" cy="39.7" r="6"/><circle cx="60.9" cy="37.7" r="5.5"/></g><path d="M53.1 45.9 V68.4 Q53.1 69.9 54.6 69.9 H58.6 Q60.1 69.9 60.1 68.4 V39.9" fill="#fff" stroke="#2e3b52" stroke-width="1.1"/><path d="M44 56 H53" stroke="#2e3b52" stroke-width="0.9"/><rect x="46" y="44.1" width="5.8" height="4.9" fill="#f6e21a"/><path d="M59 44.82 L55.04 40.5 A1.9800000000000002 1.9800000000000002 0 0 1 59 38.7 A1.9800000000000002 1.9800000000000002 0 0 1 62.96 40.5 Z" fill="#3b8fd6"/><path d="M41 59.82 L37.04 55.5 A1.9800000000000002 1.9800000000000002 0 0 1 41 53.7 A1.9800000000000002 1.9800000000000002 0 0 1 44.96 55.5 Z" fill="#e5157f"/><ellipse cx="48.5" cy="60.5" rx="2.6" ry="3.6" fill="#f07b2a"/><path d="M62.4 54.5 L64.4 59.5 L66.4 54.5 M66.4 55.5 C69.4 52.5 74.4 52.5 77.4 55.5 L72.4 58.5" fill="none" stroke="#7fc9c0" stroke-width="0.9"/><path d="M60.1 60.8 H267.1" stroke="#223d55" stroke-width="1.5"/><text x="82.5" y="58.5" font-family="Liberation Sans" font-size="12.3" font-weight="700" fill="#9a3b83" textLength="159.3" lengthAdjust="spacingAndGlyphs">Virtual<tspan font-weight="400" fill="#a24b90">Crisis</tspan>Interventions</text><text x="84.3" y="70.1" font-family="Liberation Sans" font-size="7.4" font-weight="700" fill="#5e5e66" textLength="52.7" lengthAdjust="spacingAndGlyphs">Here<tspan font-weight="400" fill="#8a8a92">and</tspan>Now</text><path d="M244.6 46.5 L255.7 35.5 L262.9 43.0 V46.5 Z" fill="#2fbf8f"/><path d="M247.6 46.5 H260.6 V53.5 H247.6 Z" fill="#fff"/><path d="M247.1 46.5 V53.5" stroke="#2fbf8f" stroke-width="1.2"/><ellipse cx="255.9" cy="50.0" rx="3.2" ry="3.6" fill="#f0735a"/><path d="M262.1 43.5 V52.5 M260.1 46.5 H264.6" stroke="#f5d24a" stroke-width="1.8"/><rect x="247.4" y="54.3" width="16.5" height="4.6" fill="#25465a"/><rect x="72.3" y="96" width="51.8" height="51.9" fill="#fde33a"/><rect x="159.6" y="96" width="51.9" height="51.9" fill="#b3e40a"/><rect x="246.3" y="96" width="51.8" height="51.9" fill="#7edbe8"/><rect x="333.4" y="96.3" width="51.2" height="51.3" fill="#fe7aab"/><rect x="421.3" y="96.3" width="50.9" height="51.3" fill="#ff9d00"/><text x="79.60000000000001" y="127.3" font-family="Liberation Sans" font-size="16.3" font-weight="700" fill="#111" textLength="37.1" lengthAdjust="spacingAndGlyphs">How</text><text x="166.9" y="129.4" font-family="Liberation Sans" font-size="22.5" font-weight="700" fill="#111" textLength="36.0" lengthAdjust="spacingAndGlyphs">are</text><text x="250.6" y="129.4" font-family="Liberation Sans" font-size="22.5" font-weight="700" fill="#111" textLength="41.9" lengthAdjust="spacingAndGlyphs">you</text><text x="338.7" y="125.9" font-family="Liberation Sans" font-size="12.2" font-weight="700" fill="#111" textLength="40.4" lengthAdjust="spacingAndGlyphs">feeling</text><text x="425.9" y="125.9" font-family="Liberation Sans" font-size="12.2" font-weight="700" fill="#111" textLength="39.9" lengthAdjust="spacingAndGlyphs">today?</text><rect x="28.2" y="187.9" width="107.5" height="106.89999999999998" fill="none" stroke="#e9efdf" stroke-width="4" opacity="0.45"/><rect x="30.7" y="190.4" width="102.5" height="101.89999999999998" fill="#fff" stroke="#3c4638" stroke-width="1.6"/><rect x="153.6" y="188.4" width="108.19999999999993" height="107.60000000000002" fill="none" stroke="#fbd6de" stroke-width="4" opacity="0.45"/><rect x="156.1" y="190.9" width="103.19999999999993" height="102.60000000000002" fill="#fff" stroke="#4d2a33" stroke-width="1.6"/><rect x="279.2" y="190.9" width="102.19999999999993" height="102.60000000000002" fill="#fff" stroke="#1d4a57" stroke-width="1.6"/><rect x="282.2" y="193.9" width="96.19999999999993" height="96.60000000000002" fill="none" stroke="#bfe3ee" stroke-width="4.5" opacity="0.75"/><rect x="404.6" y="189.1" width="108.19999999999993" height="108.10000000000002" fill="none" stroke="#fbecd2" stroke-width="4" opacity="0.45"/><rect x="407.1" y="191.6" width="103.19999999999993" height="103.10000000000002" fill="#fff" stroke="#3b3025" stroke-width="1.6"/><circle cx="81.2" cy="253.7" r="27.6" fill="#fde9d1" stroke="#262626" stroke-width="1.5"/><circle cx="210.8" cy="252.5" r="27.6" fill="#fde9d1" stroke="#262626" stroke-width="1.5"/><circle cx="330" cy="256" r="27.6" fill="#fde9d1" stroke="#262626" stroke-width="1.5"/><circle cx="462" cy="254.8" r="27.6" fill="#fde9d1" stroke="#262626" stroke-width="1.5"/><ellipse cx="70.6" cy="243.1" rx="1.8" ry="2" fill="#262626"/><ellipse cx="86.5" cy="244.3" rx="1.8" ry="1.7" fill="#262626"/><path d="M62.4 254.9 Q78.4 257.4 95.19999999999999 254.4 Q93.4 271.9 78.4 272.4 Q64.4 270.9 62.4 254.9 Z" fill="#1e1e1e"/><path d="M200 237.5 L205.5 240.5 M216 240.5 L222 237.0" stroke="#262626" stroke-width="1.1" fill="none"/><ellipse cx="203" cy="245.5" rx="1.6" ry="1.8" fill="#262626"/><ellipse cx="214.7" cy="247.8" rx="1.6" ry="1.8" fill="#262626"/><path d="M197.1 266.6 Q208.1 254.60000000000002 220.6 265.6" stroke="#262626" stroke-width="1.2" fill="none"/><path d="M315 251.3 L323 248.5 M335 249.0 L341.5 254.20000000000002 M316.2 267.7 L335 268.90000000000003" stroke="#262626" stroke-width="1.1" fill="none"/><path d="M347.5 220 H353.1 L347.5 227 H353.8" stroke="#262626" stroke-width="1.1" fill="none"/><path d="M353.5 205 H358.3 L353.5 211 H358.9" stroke="#262626" stroke-width="1.1" fill="none"/><path d="M366.5 201 H371.7 L366.5 207.5 H372.35" stroke="#262626" stroke-width="1.1" fill="none"/><path d="M449.5 238 Q452.5 234.5 455.5 238 M463.5 238 Q466.5 234.5 469.5 238" stroke="#262626" stroke-width="1" fill="none"/><ellipse cx="452.6" cy="247.8" rx="1.7" ry="2.3" fill="#262626"/><ellipse cx="466.7" cy="247.8" rx="1.7" ry="2.3" fill="#262626"/><ellipse cx="461.5" cy="266.6" rx="7" ry="6.6" fill="#1e1e1e"/><path d="M427.5 218.5 L435.7 224.4 M461.0 210.3 L461.4 213.8 M487.3 227.9 L492.4 223.7" stroke="#262626" stroke-width="1.1" fill="none"/><path d="M73.3 316.8 Q79.8 311.8 83.8 309.3 V339.3 M71.8 339.6 H99.8" stroke="#eef2e4" stroke-width="4.5" fill="none"/><path d="M73.3 316.8 Q79.8 311.8 83.8 309.3 V339.3 M71.8 339.6 H99.8" stroke="#6c7068" stroke-width="1.4" fill="none"/><path d="M196.8 314.6 Q204.8 305.6 212.8 310.6 Q216.8 317.6 208.8 325.6 L195.8 335.6 H225.8" stroke="#fad7df" stroke-width="5" fill="none"/><path d="M196.8 314.6 Q204.8 305.6 212.8 310.6 Q216.8 317.6 208.8 325.6 L195.8 335.6 H225.8" stroke="#7b5a66" stroke-width="1.4" fill="none"/><path d="M325.2 309.4 Q333.2 305.4 340.2 310.4 Q343.2 316.4 331.2 319.4 Q345.2 321.4 343.2 329.4 Q337.2 337.4 324.2 333.4" stroke="#cfe8f0" stroke-width="5" fill="none"/><path d="M325.2 309.4 Q333.2 305.4 340.2 310.4 Q343.2 316.4 331.2 319.4 Q345.2 321.4 343.2 329.4 Q337.2 337.4 324.2 333.4" stroke="#4a8aa0" stroke-width="1.5" fill="none"/><path d="M459.3 308.6 L449.3 325.6 H474.8 M466.3 311.6 V339.1" stroke="#fbefd7" stroke-width="5" fill="none"/><path d="M459.3 308.6 L449.3 325.6 H474.8 M466.3 311.6 V339.1" stroke="#4a443c" stroke-width="1.4" fill="none"/><rect x="554.9" y="338.6" width="125.10000000000002" height="3.4" fill="#1c4a5f"/><text x="555" y="337.3" font-family="Liberation Sans" font-size="3.2" font-weight="700" fill="#2a3a4a" textLength="22" lengthAdjust="spacingAndGlyphs">co-funded by</text><text x="554" y="359.2" font-family="Liberation Sans" font-size="10.5" fill="#7aa6d6" textLength="26" lengthAdjust="spacingAndGlyphs">unicef</text><circle cx="585.5" cy="355.2" r="3.6" fill="none" stroke="#7aa6d6" stroke-width="1.4"/><circle cx="585.5" cy="355.2" r="1.6" fill="#a8c4e4"/><rect x="554.5" y="361.3" width="35" height="0.5" fill="#d8e2ec"/><text x="554.5" y="368.8" font-family="Liberation Sans" font-size="6.5" fill="#aebccc" textLength="35" lengthAdjust="spacingAndGlyphs">for every child</text><circle cx="610.7" cy="360.3" r="9.3" fill="#fff" stroke="#2a3f7a" stroke-width="2"/><circle cx="610.7" cy="360.3" r="6.6" fill="#2a3f7a"/><path d="M606.7 356.3 H614.7 V361.3 Q614.7 364.8 610.7 365.8 Q606.7 364.8 606.7 361.3 Z" fill="#e8ecf4"/><rect x="607.7" y="358.8" width="6" height="1.6" fill="#2a3f7a"/><path d="M607.5 362.5 H613.9000000000001 Q613.2 364.8 610.7 365.3 Q608.2 364.8 607.5 362.5 Z" fill="#c8233a"/><text x="621.7" y="364.2" font-family="Liberation Sans" font-size="13.8" font-weight="700" fill="#1f3570" textLength="43.2" lengthAdjust="spacingAndGlyphs">US<tspan fill="#c8173a">AID</tspan></text><text x="622" y="368.5" font-family="Liberation Sans" font-size="3.6" font-weight="700" fill="#243b78" textLength="43" lengthAdjust="spacingAndGlyphs">FROM THE AMERICAN PEOPLE</text></svg>
<div style="position:absolute;left:318px;top:251px;width:681px;height:384px;border:1px solid #c6c5c9;box-sizing:border-box;"></div>
<div id="t45" style="position:absolute;left:106.5px;top:203.10px;font:400 14px/1 'Liberation Sans', sans-serif;color:#444;white-space:nowrap;transform-origin:0 0;transform:scaleX(0.8730);">84</div>
<div id="t46" style="position:absolute;left:106.5px;top:296.60px;font:400 14px/1 'Liberation Sans', sans-serif;color:#444;white-space:nowrap;transform-origin:0 0;transform:scaleX(0.8730);">85</div>
<div id="t47" style="position:absolute;left:106.5px;top:390.10px;font:400 14px/1 'Liberation Sans', sans-serif;color:#444;white-space:nowrap;transform-origin:0 0;transform:scaleX(0.8730);">86</div>
<div id="t48" style="position:absolute;left:106.5px;top:577.60px;font:400 14px/1 'Liberation Sans', sans-serif;color:#444;white-space:nowrap;transform-origin:0 0;transform:scaleX(0.8730);">88</div>
<div id="t49" style="position:absolute;left:106.5px;top:671.10px;font:400 14px/1 'Liberation Sans', sans-serif;color:#444;white-space:nowrap;transform-origin:0 0;transform:scaleX(0.8730);">89</div>
<div id="t50" style="position:absolute;left:106.5px;top:484.10px;font:400 14px/1 'Liberation Sans', sans-serif;color:#c0432a;white-space:nowrap;transform-origin:0 0;transform:scaleX(0.8730);">87</div>
<svg style="position:absolute;left:110px;top:685px;" width="12" height="10" viewBox="0 0 12 10"><path d="M6 0.5 L7.5 4 H11.5 L8.3 6.3 L9.5 10 L6 7.8 L2.5 10 L3.7 6.3 L0.5 4 H4.5 Z" fill="#555"/></svg>
<div style="position:absolute;left:133.9px;top:205.9px;width:133.3px;height:76px;background:#c8c8cb;"></div>
<div style="position:absolute;left:134.4px;top:206.4px;width:132.3px;height:75px;background:#fff;overflow:hidden;"><div style="position:absolute;left:8.0px;top:6.5px;width:5.0px;height:7.0px;background:radial-gradient(circle,#9ac0d0 0%,#c8d8e0 50%,rgba(255,255,255,0) 72%);filter:blur(0.4px)"></div><div style="position:absolute;left:7.0px;top:9.0px;width:3.0px;height:3.0px;background:#e060a0;filter:blur(0.5px);border-radius:2px"></div><div style="position:absolute;left:13.0px;top:9.2px;width:35.0px;height:2.6px;background:linear-gradient(90deg,#c890b8,#d8a8c8 50%,#e0c0d8);filter:blur(0.5px);opacity:0.75"></div><div style="position:absolute;left:13.5px;top:12.0px;width:35.0px;height:0.7px;background:#7a8aa0;opacity:0.6"></div><div style="position:absolute;left:48.0px;top:6.0px;width:4.0px;height:6.0px;background:radial-gradient(circle,#40b090 0%,#70c0a0 50%,rgba(255,255,255,0) 75%);filter:blur(0.3px)"></div><div style="position:absolute;left:4.5px;top:17.1px;width:99.0px;height:54.4px;background:#35628f;"></div><div style="position:absolute;left:11.6px;top:19.1px;width:21.0px;height:28.2px;background:radial-gradient(ellipse at 55% 50%,#f0a0c0 0 6%,rgba(0,0,0,0) 10%),radial-gradient(ellipse at 50% 55%,#d8a060 0%,#b07030 40%,rgba(120,80,40,0) 75%),linear-gradient(180deg,#a8c8e0 0%,#b8a078 45%,#8a6a40 100%);filter:blur(0.6px);"></div><div style="position:absolute;left:37.6px;top:22.4px;width:30.0px;height:22.3px;background:radial-gradient(ellipse at 60% 45%,#c89060 0%,#e0c0a0 25%,rgba(220,220,220,0) 55%),linear-gradient(180deg,#d8d8dc,#e8e8ea 60%,#f4f4f6);filter:blur(0.6px);"></div><div style="position:absolute;left:73.6px;top:24.0px;width:26.0px;height:17.7px;background:radial-gradient(ellipse at 60% 50%,#f8f8f8 0%,#f0f0f0 35%,rgba(200,200,200,0) 55%),linear-gradient(90deg,#9a9a9c,#b8b8ba 40%,#d0d0d0 70%,#b07a50);filter:blur(0.6px);"></div><div style="position:absolute;left:11.1px;top:51.7px;width:26.5px;height:18.3px;background:radial-gradient(ellipse at 45% 55%,#c8b090 0%,#a08060 35%,rgba(80,60,40,0) 70%),linear-gradient(90deg,#4a3a30,#6a5a48 50%,#3a2e26);filter:blur(0.6px);"></div><div style="position:absolute;left:41.5px;top:48.4px;width:32.0px;height:21.3px;background:radial-gradient(ellipse at 55% 60%,#e8e0d8 0%,#c8c0b8 35%,rgba(200,200,200,0) 65%),linear-gradient(180deg,#c8c8cc,#dcdcde 50%,#e8e8ea);filter:blur(0.6px);"></div><div style="position:absolute;left:74px;top:48.5px;width:28px;text-align:center;font:700 3.9px/4.2px Liberation Sans,sans-serif;color:#14254a;filter:blur(0.3px)">Which<br>dog are<br>you<br>today ?</div><div style="position:absolute;left:9.5px;top:22.0px;width:5.5px;height:5.5px;background:#fff;transform:rotate(45deg);filter:blur(0.3px)"></div><div style="position:absolute;left:38.0px;top:24.5px;width:5.5px;height:5.5px;background:#fff;transform:rotate(45deg);filter:blur(0.3px)"></div><div style="position:absolute;left:74.0px;top:26.0px;width:5.5px;height:5.5px;background:#fff;transform:rotate(45deg);filter:blur(0.3px)"></div><div style="position:absolute;left:10.5px;top:53.0px;width:5.5px;height:5.5px;background:#fff;transform:rotate(45deg);filter:blur(0.3px)"></div><div style="position:absolute;left:43.0px;top:50.0px;width:5.5px;height:5.5px;background:#fff;transform:rotate(45deg);filter:blur(0.3px)"></div><div style="position:absolute;left:107.0px;top:65.3px;width:25.0px;height:1.2px;background:#38536e;"></div><div style="position:absolute;left:116.0px;top:68.8px;width:14.0px;height:3.0px;background:radial-gradient(ellipse,#c04060 0%,#d07080 50%,rgba(255,255,255,0) 80%);filter:blur(0.5px)"></div><div style="position:absolute;left:108.0px;top:68.8px;width:6.0px;height:3.0px;background:#d4e0ea;filter:blur(0.6px)"></div></div>
<div style="position:absolute;left:133.9px;top:298.9px;width:133.3px;height:76px;background:#c8c8cb;"></div>
<div style="position:absolute;left:134.4px;top:299.4px;width:132.3px;height:75px;background:#fff;overflow:hidden;"><div style="position:absolute;left:8.0px;top:6.5px;width:5.0px;height:7.0px;background:radial-gradient(circle,#9ac0d0 0%,#c8d8e0 50%,rgba(255,255,255,0) 72%);filter:blur(0.4px)"></div><div style="position:absolute;left:7.0px;top:9.0px;width:3.0px;height:3.0px;background:#e060a0;filter:blur(0.5px);border-radius:2px"></div><div style="position:absolute;left:13.0px;top:9.2px;width:35.0px;height:2.6px;background:linear-gradient(90deg,#c890b8,#d8a8c8 50%,#e0c0d8);filter:blur(0.5px);opacity:0.75"></div><div style="position:absolute;left:13.5px;top:12.0px;width:35.0px;height:0.7px;background:#7a8aa0;opacity:0.6"></div><div style="position:absolute;left:48.0px;top:6.0px;width:4.0px;height:6.0px;background:radial-gradient(circle,#40b090 0%,#70c0a0 50%,rgba(255,255,255,0) 75%);filter:blur(0.3px)"></div><div style="position:absolute;left:4.5px;top:17.7px;width:32.1px;height:21.3px;background:radial-gradient(ellipse at 65% 50%,#f0d0c0 0%,#e0a890 25%,rgba(200,140,100,0) 50%),linear-gradient(90deg,#c89060,#a87040 40%,#d0a070 60%,#7a4a2a);filter:blur(0.6px);"></div><div style="position:absolute;left:44.3px;top:18.5px;width:26.0px;height:18.3px;background:radial-gradient(ellipse at 60% 55%,#8a6a48 0%,#a08060 25%,rgba(200,180,150,0) 50%),linear-gradient(90deg,#f4f0ea,#e8dcc8 50%,#c8b090);filter:blur(0.6px);"></div><div style="position:absolute;left:72.5px;top:17.7px;width:31.0px;height:22.4px;background:radial-gradient(ellipse at 50% 45%,#e8b0a0 0%,#c88070 25%,rgba(150,150,150,0) 50%),linear-gradient(180deg,#a8c8d8,#88a8b8 60%,#506878);filter:blur(0.6px);"></div><div style="position:absolute;left:4.2px;top:43.4px;width:32.4px;height:22.7px;background:radial-gradient(ellipse at 35% 60%,#3a3430 0%,#5a5048 30%,rgba(120,120,120,0) 60%),linear-gradient(90deg,#a0a0a2,#c8c8ca 50%,#d8d8da);filter:blur(0.6px);"></div><div style="position:absolute;left:38.2px;top:40.6px;width:32.7px;height:20.5px;background:radial-gradient(ellipse at 30% 30%,#4a3a30 0%,#7a6050 25%,rgba(240,240,240,0) 45%),radial-gradient(ellipse at 70% 70%,#b0b0b0 0%,rgba(200,200,200,0) 50%),linear-gradient(180deg,#f0f0f0,#e8e8e8);filter:blur(0.6px);"></div><div style="position:absolute;left:72.5px;top:43.4px;width:31.0px;height:22.1px;background:radial-gradient(ellipse at 50% 55%,#8090c0 0%,#9098b8 30%,rgba(150,150,150,0) 55%),linear-gradient(180deg,#c8c8cc,#a8a8aa 60%,#4a4040);filter:blur(0.6px);"></div><div style="position:absolute;left:4.2px;top:33.1px;width:5.5px;height:5.5px;background:#fff;border:0.8px solid #8a9a8a;border-radius:50%;box-sizing:border-box;filter:blur(0.2px)"></div><div style="position:absolute;left:40.1px;top:33.1px;width:5.5px;height:5.5px;background:#fff;border:0.8px solid #8a9a8a;border-radius:50%;box-sizing:border-box;filter:blur(0.2px)"></div><div style="position:absolute;left:71.7px;top:35.4px;width:5.5px;height:5.5px;background:#fff;border:0.8px solid #8a9a8a;border-radius:50%;box-sizing:border-box;filter:blur(0.2px)"></div><div style="position:absolute;left:3.6px;top:44.2px;width:5.5px;height:5.5px;background:#fff;border:0.8px solid #8a9a8a;border-radius:50%;box-sizing:border-box;filter:blur(0.2px)"></div><div style="position:absolute;left:39.6px;top:52.5px;width:5.5px;height:5.5px;background:#fff;border:0.8px solid #8a9a8a;border-radius:50%;box-sizing:border-box;filter:blur(0.2px)"></div><div style="position:absolute;left:72.2px;top:61.4px;width:5.5px;height:5.5px;background:#fff;border:0.8px solid #8a9a8a;border-radius:50%;box-sizing:border-box;filter:blur(0.2px)"></div><div style="position:absolute;left:39.0px;top:62.5px;width:30.0px;height:1.5px;background:#b0b0b0;filter:blur(0.4px)"></div><div style="position:absolute;left:39.0px;top:65.0px;width:30.0px;height:1.5px;background:#c0c0c0;filter:blur(0.4px)"></div><div style="position:absolute;left:107.0px;top:66.0px;width:25.0px;height:1.2px;background:#38536e;"></div><div style="position:absolute;left:116.0px;top:69.5px;width:14.0px;height:3.0px;background:radial-gradient(ellipse,#c04060 0%,#d07080 50%,rgba(255,255,255,0) 80%);filter:blur(0.5px)"></div><div style="position:absolute;left:108.0px;top:69.5px;width:6.0px;height:3.0px;background:#d4e0ea;filter:blur(0.6px)"></div></div>
<div style="position:absolute;left:133.9px;top:392.9px;width:133.3px;height:76px;background:#c8c8cb;"></div>
<div style="position:absolute;left:134.4px;top:393.4px;width:132.3px;height:75px;background:#fff;overflow:hidden;"><div style="position:absolute;left:8.0px;top:6.5px;width:5.0px;height:7.0px;background:radial-gradient(circle,#9ac0d0 0%,#c8d8e0 50%,rgba(255,255,255,0) 72%);filter:blur(0.4px)"></div><div style="position:absolute;left:7.0px;top:9.0px;width:3.0px;height:3.0px;background:#e060a0;filter:blur(0.5px);border-radius:2px"></div><div style="position:absolute;left:13.0px;top:9.2px;width:35.0px;height:2.6px;background:linear-gradient(90deg,#c890b8,#d8a8c8 50%,#e0c0d8);filter:blur(0.5px);opacity:0.75"></div><div style="position:absolute;left:13.5px;top:12.0px;width:35.0px;height:0.7px;background:#7a8aa0;opacity:0.6"></div><div style="position:absolute;left:48.0px;top:6.0px;width:4.0px;height:6.0px;background:radial-gradient(circle,#40b090 0%,#70c0a0 50%,rgba(255,255,255,0) 75%);filter:blur(0.3px)"></div><div style="position:absolute;left:2.8px;top:17.1px;width:28.8px;height:17.5px;background:radial-gradient(ellipse at 40% 50%,#c8a890 0%,#8a7060 30%,rgba(90,70,60,0) 60%),linear-gradient(90deg,#6a5040,#8a7060 50%,#4a3828);filter:blur(0.6px);"></div><div style="position:absolute;left:31.6px;top:17.1px;width:5.0px;height:17.5px;background:#6a4a3a;filter:blur(0.5px)"></div><div style="position:absolute;left:37.6px;top:17.1px;width:25.0px;height:17.5px;background:radial-gradient(ellipse at 35% 55%,#40a060 0%,#d0a080 20%,rgba(60,60,60,0) 45%),linear-gradient(90deg,#3a3632,#4a4440 50%,#2a2622);filter:blur(0.6px);"></div><div style="position:absolute;left:2.8px;top:35.1px;width:29.3px;height:12.7px;background:radial-gradient(ellipse at 55% 50%,#a07858 0%,#c0a080 35%,rgba(200,180,160,0) 65%),linear-gradient(90deg,#d8c8b0,#c0b098);filter:blur(0.6px);"></div><div style="position:absolute;left:33.8px;top:35.6px;width:28.8px;height:20.0px;background:radial-gradient(ellipse at 60% 35%,#d8a890 0%,rgba(200,200,200,0) 30%),linear-gradient(180deg,#c8c4c8 0%,#b0acb0 50%,#3a3a5a 65%,#5a5a70 80%,#d04848 100%);filter:blur(0.6px);"></div><div style="position:absolute;left:2.8px;top:48.4px;width:29.0px;height:18.8px;background:radial-gradient(ellipse at 40% 45%,#8a5a3a 0%,#a87858 25%,rgba(180,180,180,0) 55%),linear-gradient(90deg,#c0dce8,#b8c4c8 50%,#a0a4a8);filter:blur(0.6px);"></div><div style="position:absolute;left:36.6px;top:56.6px;width:22.1px;height:16.7px;background:radial-gradient(ellipse at 40% 55%,#c05050 0%,#c87070 20%,rgba(230,230,230,0) 40%),radial-gradient(ellipse at 50% 25%,#5a4030 0%,rgba(230,230,230,0) 25%),linear-gradient(180deg,#e8ecf0,#dfe3e8 70%,#505868);filter:blur(0.6px);"></div><div style="position:absolute;left:65.3px;top:51.7px;width:28.8px;height:18.8px;background:radial-gradient(ellipse at 30% 70%,#303068 0%,#4a4a7a 20%,rgba(220,220,220,0) 38%),linear-gradient(90deg,#e6e6e8,#f0f0f0 50%,#d8d6d0);filter:blur(0.6px);"></div><div style="position:absolute;left:64px;top:17.5px;width:42px;text-align:center;font:4.6px/4.9px Liberation Sans,sans-serif;color:#222;filter:blur(0.25px)">How do you feel<br>about online school<br>today?</div><div style="position:absolute;left:63px;top:35px;width:44px;text-align:center;font:2.6px/3px Liberation Sans,sans-serif;color:#555;filter:blur(0.3px)">Type your answer in the chat</div><div style="position:absolute;left:0.0px;top:0.0px;width:0.0px;height:0.0px;background:none;"></div><div style="position:absolute;left:107.0px;top:65.8px;width:25.0px;height:1.2px;background:#38536e;"></div><div style="position:absolute;left:116.0px;top:69.3px;width:14.0px;height:3.0px;background:radial-gradient(ellipse,#c04060 0%,#d07080 50%,rgba(255,255,255,0) 80%);filter:blur(0.5px)"></div><div style="position:absolute;left:108.0px;top:69.3px;width:6.0px;height:3.0px;background:#d4e0ea;filter:blur(0.6px)"></div></div>
<div style="position:absolute;left:130.3px;top:482.9px;width:140.1px;height:83px;background:#b5301f;"></div>
<svg style="position:absolute;left:134px;top:486.8px;filter:blur(0.25px)" width="133.3" height="75.4" viewBox="0 0 680 383" preserveAspectRatio="none"><rect x="0" y="0" width="680" height="383" fill="#fdfcfe"/><g fill="#d9dbe2"><ellipse cx="56.9" cy="43.7" rx="16.5" ry="7"/><circle cx="51.9" cy="39.7" r="6"/><circle cx="60.9" cy="37.7" r="5.5"/></g><path d="M53.1 45.9 V68.4 Q53.1 69.9 54.6 69.9 H58.6 Q60.1 69.9 60.1 68.4 V39.9" fill="#fff" stroke="#2e3b52" stroke-width="1.1"/><path d="M44 56 H53" stroke="#2e3b52" stroke-width="0.9"/><rect x="46" y="44.1" width="5.8" height="4.9" fill="#f6e21a"/><path d="M59 44.82 L55.04 40.5 A1.9800000000000002 1.9800000000000002 0 0 1 59 38.7 A1.9800000000000002 1.9800000000000002 0 0 1 62.96 40.5 Z" fill="#3b8fd6"/><path d="M41 59.82 L37.04 55.5 A1.9800000000000002 1.9800000000000002 0 0 1 41 53.7 A1.9800000000000002 1.9800000000000002 0 0 1 44.96 55.5 Z" fill="#e5157f"/><ellipse cx="48.5" cy="60.5" rx="2.6" ry="3.6" fill="#f07b2a"/><path d="M62.4 54.5 L64.4 59.5 L66.4 54.5 M66.4 55.5 C69.4 52.5 74.4 52.5 77.4 55.5 L72.4 58.5" fill="none" stroke="#7fc9c0" stroke-width="0.9"/><path d="M60.1 60.8 H267.1" stroke="#223d55" stroke-width="1.5"/><text x="82.5" y="58.5" font-family="Liberation Sans" font-size="12.3" font-weight="700" fill="#9a3b83" textLength="159.3" lengthAdjust="spacingAndGlyphs">Virtual<tspan font-weight="400" fill="#a24b90">Crisis</tspan>Interventions</text><text x="84.3" y="70.1" font-family="Liberation Sans" font-size="7.4" font-weight="700" fill="#5e5e66" textLength="52.7" lengthAdjust="spacingAndGlyphs">Here<tspan font-weight="400" fill="#8a8a92">and</tspan>Now</text><path d="M244.6 46.5 L255.7 35.5 L262.9 43.0 V46.5 Z" fill="#2fbf8f"/><path d="M247.6 46.5 H260.6 V53.5 H247.6 Z" fill="#fff"/><path d="M247.1 46.5 V53.5" stroke="#2fbf8f" stroke-width="1.2"/><ellipse cx="255.9" cy="50.0" rx="3.2" ry="3.6" fill="#f0735a"/><path d="M262.1 43.5 V52.5 M260.1 46.5 H264.6" stroke="#f5d24a" stroke-width="1.8"/><rect x="247.4" y="54.3" width="16.5" height="4.6" fill="#25465a"/><rect x="72.3" y="96" width="51.8" height="51.9" fill="#fde33a"/><rect x="159.6" y="96" width="51.9" height="51.9" fill="#b3e40a"/><rect x="246.3" y="96" width="51.8" height="51.9" fill="#7edbe8"/><rect x="333.4" y="96.3" width="51.2" height="51.3" fill="#fe7aab"/><rect x="421.3" y="96.3" width="50.9" height="51.3" fill="#ff9d00"/><text x="79.60000000000001" y="127.3" font-family="Liberation Sans" font-size="16.3" font-weight="700" fill="#111" textLength="37.1" lengthAdjust="spacingAndGlyphs">How</text><text x="166.9" y="129.4" font-family="Liberation Sans" font-size="22.5" font-weight="700" fill="#111" textLength="36.0" lengthAdjust="spacingAndGlyphs">are</text><text x="250.6" y="129.4" font-family="Liberation Sans" font-size="22.5" font-weight="700" fill="#111" textLength="41.9" lengthAdjust="spacingAndGlyphs">you</text><text x="338.7" y="125.9" font-family="Liberation Sans" font-size="12.2" font-weight="700" fill="#111" textLength="40.4" lengthAdjust="spacingAndGlyphs">feeling</text><text x="425.9" y="125.9" font-family="Liberation Sans" font-size="12.2" font-weight="700" fill="#111" textLength="39.9" lengthAdjust="spacingAndGlyphs">today?</text><rect x="28.2" y="187.9" width="107.5" height="106.89999999999998" fill="none" stroke="#e9efdf" stroke-width="4" opacity="0.45"/><rect x="30.7" y="190.4" width="102.5" height="101.89999999999998" fill="#fff" stroke="#3c4638" stroke-width="1.6"/><rect x="153.6" y="188.4" width="108.19999999999993" height="107.60000000000002" fill="none" stroke="#fbd6de" stroke-width="4" opacity="0.45"/><rect x="156.1" y="190.9" width="103.19999999999993" height="102.60000000000002" fill="#fff" stroke="#4d2a33" stroke-width="1.6"/><rect x="279.2" y="190.9" width="102.19999999999993" height="102.60000000000002" fill="#fff" stroke="#1d4a57" stroke-width="1.6"/><rect x="282.2" y="193.9" width="96.19999999999993" height="96.60000000000002" fill="none" stroke="#bfe3ee" stroke-width="4.5" opacity="0.75"/><rect x="404.6" y="189.1" width="108.19999999999993" height="108.10000000000002" fill="none" stroke="#fbecd2" stroke-width="4" opacity="0.45"/><rect x="407.1" y="191.6" width="103.19999999999993" height="103.10000000000002" fill="#fff" stroke="#3b3025" stroke-width="1.6"/><circle cx="81.2" cy="253.7" r="27.6" fill="#fde9d1" stroke="#262626" stroke-width="1.5"/><circle cx="210.8" cy="252.5" r="27.6" fill="#fde9d1" stroke="#262626" stroke-width="1.5"/><circle cx="330" cy="256" r="27.6" fill="#fde9d1" stroke="#262626" stroke-width="1.5"/><circle cx="462" cy="254.8" r="27.6" fill="#fde9d1" stroke="#262626" stroke-width="1.5"/><ellipse cx="70.6" cy="243.1" rx="1.8" ry="2" fill="#262626"/><ellipse cx="86.5" cy="244.3" rx="1.8" ry="1.7" fill="#262626"/><path d="M62.4 254.9 Q78.4 257.4 95.19999999999999 254.4 Q93.4 271.9 78.4 272.4 Q64.4 270.9 62.4 254.9 Z" fill="#1e1e1e"/><path d="M200 237.5 L205.5 240.5 M216 240.5 L222 237.0" stroke="#262626" stroke-width="1.1" fill="none"/><ellipse cx="203" cy="245.5" rx="1.6" ry="1.8" fill="#262626"/><ellipse cx="214.7" cy="247.8" rx="1.6" ry="1.8" fill="#262626"/><path d="M197.1 266.6 Q208.1 254.60000000000002 220.6 265.6" stroke="#262626" stroke-width="1.2" fill="none"/><path d="M315 251.3 L323 248.5 M335 249.0 L341.5 254.20000000000002 M316.2 267.7 L335 268.90000000000003" stroke="#262626" stroke-width="1.1" fill="none"/><path d="M347.5 220 H353.1 L347.5 227 H353.8" stroke="#262626" stroke-width="1.1" fill="none"/><path d="M353.5 205 H358.3 L353.5 211 H358.9" stroke="#262626" stroke-width="1.1" fill="none"/><path d="M366.5 201 H371.7 L366.5 207.5 H372.35" stroke="#262626" stroke-width="1.1" fill="none"/><path d="M449.5 238 Q452.5 234.5 455.5 238 M463.5 238 Q466.5 234.5 469.5 238" stroke="#262626" stroke-width="1" fill="none"/><ellipse cx="452.6" cy="247.8" rx="1.7" ry="2.3" fill="#262626"/><ellipse cx="466.7" cy="247.8" rx="1.7" ry="2.3" fill="#262626"/><ellipse cx="461.5" cy="266.6" rx="7" ry="6.6" fill="#1e1e1e"/><path d="M427.5 218.5 L435.7 224.4 M461.0 210.3 L461.4 213.8 M487.3 227.9 L492.4 223.7" stroke="#262626" stroke-width="1.1" fill="none"/><path d="M73.3 316.8 Q79.8 311.8 83.8 309.3 V339.3 M71.8 339.6 H99.8" stroke="#eef2e4" stroke-width="4.5" fill="none"/><path d="M73.3 316.8 Q79.8 311.8 83.8 309.3 V339.3 M71.8 339.6 H99.8" stroke="#6c7068" stroke-width="1.4" fill="none"/><path d="M196.8 314.6 Q204.8 305.6 212.8 310.6 Q216.8 317.6 208.8 325.6 L195.8 335.6 H225.8" stroke="#fad7df" stroke-width="5" fill="none"/><path d="M196.8 314.6 Q204.8 305.6 212.8 310.6 Q216.8 317.6 208.8 325.6 L195.8 335.6 H225.8" stroke="#7b5a66" stroke-width="1.4" fill="none"/><path d="M325.2 309.4 Q333.2 305.4 340.2 310.4 Q343.2 316.4 331.2 319.4 Q345.2 321.4 343.2 329.4 Q337.2 337.4 324.2 333.4" stroke="#cfe8f0" stroke-width="5" fill="none"/><path d="M325.2 309.4 Q333.2 305.4 340.2 310.4 Q343.2 316.4 331.2 319.4 Q345.2 321.4 343.2 329.4 Q337.2 337.4 324.2 333.4" stroke="#4a8aa0" stroke-width="1.5" fill="none"/><path d="M459.3 308.6 L449.3 325.6 H474.8 M466.3 311.6 V339.1" stroke="#fbefd7" stroke-width="5" fill="none"/><path d="M459.3 308.6 L449.3 325.6 H474.8 M466.3 311.6 V339.1" stroke="#4a443c" stroke-width="1.4" fill="none"/><rect x="554.9" y="338.6" width="125.10000000000002" height="3.4" fill="#1c4a5f"/><text x="555" y="337.3" font-family="Liberation Sans" font-size="3.2" font-weight="700" fill="#2a3a4a" textLength="22" lengthAdjust="spacingAndGlyphs">co-funded by</text><text x="554" y="359.2" font-family="Liberation Sans" font-size="10.5" fill="#7aa6d6" textLength="26" lengthAdjust="spacingAndGlyphs">unicef</text><circle cx="585.5" cy="355.2" r="3.6" fill="none" stroke="#7aa6d6" stroke-width="1.4"/><circle cx="585.5" cy="355.2" r="1.6" fill="#a8c4e4"/><rect x="554.5" y="361.3" width="35" height="0.5" fill="#d8e2ec"/><text x="554.5" y="368.8" font-family="Liberation Sans" font-size="6.5" fill="#aebccc" textLength="35" lengthAdjust="spacingAndGlyphs">for every child</text><circle cx="610.7" cy="360.3" r="9.3" fill="#fff" stroke="#2a3f7a" stroke-width="2"/><circle cx="610.7" cy="360.3" r="6.6" fill="#2a3f7a"/><path d="M606.7 356.3 H614.7 V361.3 Q614.7 364.8 610.7 365.8 Q606.7 364.8 606.7 361.3 Z" fill="#e8ecf4"/><rect x="607.7" y="358.8" width="6" height="1.6" fill="#2a3f7a"/><path d="M607.5 362.5 H613.9000000000001 Q613.2 364.8 610.7 365.3 Q608.2 364.8 607.5 362.5 Z" fill="#c8233a"/><text x="621.7" y="364.2" font-family="Liberation Sans" font-size="13.8" font-weight="700" fill="#1f3570" textLength="43.2" lengthAdjust="spacingAndGlyphs">US<tspan fill="#c8173a">AID</tspan></text><text x="622" y="368.5" font-family="Liberation Sans" font-size="3.6" font-weight="700" fill="#243b78" textLength="43" lengthAdjust="spacingAndGlyphs">FROM THE AMERICAN PEOPLE</text></svg>
<div style="position:absolute;left:133.9px;top:579.8px;width:133.3px;height:76px;background:#c8c8cb;"></div>
<div style="position:absolute;left:134.4px;top:580.3px;width:132.3px;height:75px;background:#fff;overflow:hidden;"><div style="position:absolute;left:8.0px;top:6.5px;width:5.0px;height:7.0px;background:radial-gradient(circle,#9ac0d0 0%,#c8d8e0 50%,rgba(255,255,255,0) 72%);filter:blur(0.4px)"></div><div style="position:absolute;left:7.0px;top:9.0px;width:3.0px;height:3.0px;background:#e060a0;filter:blur(0.5px);border-radius:2px"></div><div style="position:absolute;left:13.0px;top:9.2px;width:35.0px;height:2.6px;background:linear-gradient(90deg,#c890b8,#d8a8c8 50%,#e0c0d8);filter:blur(0.5px);opacity:0.75"></div><div style="position:absolute;left:13.5px;top:12.0px;width:35.0px;height:0.7px;background:#7a8aa0;opacity:0.6"></div><div style="position:absolute;left:48.0px;top:6.0px;width:4.0px;height:6.0px;background:radial-gradient(circle,#40b090 0%,#70c0a0 50%,rgba(255,255,255,0) 75%);filter:blur(0.3px)"></div><div style="position:absolute;left:59.0px;top:15.3px;width:14.5px;height:3.2px;background:#8a4a50;filter:blur(0.6px)"></div><div style="position:absolute;left:19.0px;top:19.8px;width:1.8px;height:1.8px;background:#f0d040;filter:blur(0.4px);border-radius:50%"></div><div style="position:absolute;left:25.5px;top:19.8px;width:1.8px;height:1.8px;background:#f0d040;filter:blur(0.4px);border-radius:50%"></div><div style="position:absolute;left:32.0px;top:19.8px;width:1.8px;height:1.8px;background:#f0d040;filter:blur(0.4px);border-radius:50%"></div><div style="position:absolute;left:11.5px;top:27.2px;width:2.2px;height:2.2px;background:#e8c030;filter:blur(0.4px)"></div><div style="position:absolute;left:14.0px;top:27.4px;width:66.6px;height:1.6px;background:#76686e;filter:blur(0.6px);opacity:0.7"></div><div style="position:absolute;left:11.5px;top:33.3px;width:2.2px;height:2.2px;background:#e8c030;filter:blur(0.4px)"></div><div style="position:absolute;left:14.0px;top:33.5px;width:66.6px;height:1.6px;background:#76686e;filter:blur(0.6px);opacity:0.7"></div><div style="position:absolute;left:11.5px;top:38.7px;width:2.2px;height:2.2px;background:#e8c030;filter:blur(0.4px)"></div><div style="position:absolute;left:14.0px;top:38.9px;width:30.8px;height:1.6px;background:#76686e;filter:blur(0.6px);opacity:0.7"></div><div style="position:absolute;left:11.5px;top:44.4px;width:2.2px;height:2.2px;background:#e8c030;filter:blur(0.4px)"></div><div style="position:absolute;left:14.0px;top:44.6px;width:99.2px;height:1.6px;background:#76686e;filter:blur(0.6px);opacity:0.7"></div><div style="position:absolute;left:11.5px;top:54.6px;width:2.2px;height:2.2px;background:#e8c030;filter:blur(0.4px)"></div><div style="position:absolute;left:14.0px;top:54.8px;width:88.8px;height:1.6px;background:#76686e;filter:blur(0.6px);opacity:0.7"></div><div style="position:absolute;left:14.0px;top:48.9px;width:42.0px;height:1.6px;background:#76686e;filter:blur(0.6px);opacity:0.7"></div><div style="position:absolute;left:107.0px;top:66.1px;width:25.0px;height:1.2px;background:#38536e;"></div><div style="position:absolute;left:116.0px;top:69.6px;width:14.0px;height:3.0px;background:radial-gradient(ellipse,#c04060 0%,#d07080 50%,rgba(255,255,255,0) 80%);filter:blur(0.5px)"></div><div style="position:absolute;left:108.0px;top:69.6px;width:6.0px;height:3.0px;background:#d4e0ea;filter:blur(0.6px)"></div></div>
<div style="position:absolute;left:133.9px;top:674px;width:133.3px;height:21px;background:#c8c8cb;"></div>
<div style="position:absolute;left:134.4px;top:674.5px;width:132.3px;height:20.5px;background:#fff;overflow:hidden;"><div style="position:absolute;left:8.0px;top:6.5px;width:5.0px;height:7.0px;background:radial-gradient(circle,#9ac0d0 0%,#c8d8e0 50%,rgba(255,255,255,0) 72%);filter:blur(0.4px)"></div><div style="position:absolute;left:7.0px;top:9.0px;width:3.0px;height:3.0px;background:#e060a0;filter:blur(0.5px);border-radius:2px"></div><div style="position:absolute;left:13.0px;top:9.2px;width:35.0px;height:2.6px;background:linear-gradient(90deg,#c890b8,#d8a8c8 50%,#e0c0d8);filter:blur(0.5px);opacity:0.75"></div><div style="position:absolute;left:13.5px;top:12.0px;width:35.0px;height:0.7px;background:#7a8aa0;opacity:0.6"></div><div style="position:absolute;left:48.0px;top:6.0px;width:4.0px;height:6.0px;background:radial-gradient(circle,#40b090 0%,#70c0a0 50%,rgba(255,255,255,0) 75%);filter:blur(0.3px)"></div><div style="position:absolute;left:56.0px;top:7.5px;width:60.0px;height:2.2px;background:#8a8a90;filter:blur(0.8px)"></div><div style="position:absolute;left:70.0px;top:10.5px;width:50.0px;height:0.8px;background:#333;filter:blur(0.3px)"></div><div style="position:absolute;left:28.0px;top:14.0px;width:28.0px;height:6.0px;background:linear-gradient(90deg,#e8d8b0,#c0a070);filter:blur(0.7px);"></div><div style="position:absolute;left:80.0px;top:14.0px;width:32.0px;height:6.0px;background:linear-gradient(90deg,#e8d0b0,#d04040);filter:blur(0.7px);"></div></div>
<svg style="position:absolute;left:255px;top:548px;" width="14" height="20" viewBox="0 0 14 20"><path d="M1.5 1.5 V15.5 L5 12.2 L7.6 18 L10 17 L7.5 11.3 H12.3 Z" fill="#fff" stroke="#111" stroke-width="1.1" stroke-linejoin="round"/></svg>
<div id="t51" style="position:absolute;left:102.4px;top:699.65px;font:400 11px/1 'Liberation Sans', sans-serif;color:#444;white-space:nowrap;transform-origin:0 0;transform:scaleX(0.9238);">Slide 87 of 102</div>
<svg style="position:absolute;left:187px;top:698px;" width="15" height="13" viewBox="0 0 15 13"><path d="M1 1.5 H5.5 Q7 1.5 7 3 V11.5 Q7 10.5 5.5 10.5 H1 Z" fill="none" stroke="#707070" stroke-width="1"/><path d="M7 3 Q7 1.5 8.5 1.5 H9" fill="none" stroke="#707070" stroke-width="1"/><path d="M7 11.5 V12.5" stroke="#707070"/><path d="M9.5 3 L13 7 M13 3 L9.5 7" stroke="#707070" stroke-width="1"/></svg>
<div id="t52" style="position:absolute;left:217.7px;top:699.65px;font:400 11px/1 'Liberation Sans', sans-serif;color:#444;white-space:nowrap;transform-origin:0 0;transform:scaleX(0.9244);">English (United States)</div>
<svg style="position:absolute;left:557px;top:697px;" width="13" height="15" viewBox="0 0 13 15"><path d="M6.5 1 L3.5 4 H9.5 Z" fill="#666"/><path d="M1.5 7 H11.5 M1.5 9.5 H11.5 M1.5 12 H11.5" stroke="#666" stroke-width="1.1"/></svg>
<div id="t53" style="position:absolute;left:573.3px;top:701.25px;font:400 11px/1 'Liberation Sans', sans-serif;color:#444;white-space:nowrap;transform-origin:0 0;transform:scaleX(0.9287);">Notes</div>
<svg style="position:absolute;left:618px;top:698px;" width="14" height="14" viewBox="0 0 14 14"><path d="M1 1 H13 V9.5 H5.5 L2.5 12.5 V9.5 H1 Z" fill="#6a6a6a"/></svg>
<div id="t54" style="position:absolute;left:634.8px;top:701.25px;font:400 11px/1 'Liberation Sans', sans-serif;color:#444;white-space:nowrap;transform-origin:0 0;transform:scaleX(0.8949);">Comments</div>
<div style="position:absolute;left:701px;top:695.5px;width:36px;height:19.2px;background:#c8c8c8;"></div>
<svg style="position:absolute;left:711px;top:698px;" width="15" height="13" viewBox="0 0 15 13"><rect x="1" y="1" width="12.5" height="10.5" fill="none" stroke="#666" stroke-width="1"/><path d="M3.5 1 V11.5" stroke="#666"/><rect x="6" y="3" width="5" height="3.5" fill="none" stroke="#666" stroke-width="1"/></svg>
<svg style="position:absolute;left:748px;top:698px;" width="14" height="13" viewBox="0 0 14 13"><rect x="1" y="1" width="5" height="4" fill="none" stroke="#777" stroke-width="1"/><rect x="8" y="1" width="5" height="4" fill="none" stroke="#777" stroke-width="1"/><rect x="1" y="7.5" width="5" height="4" fill="none" stroke="#777" stroke-width="1"/><rect x="8" y="7.5" width="5" height="4" fill="none" stroke="#777" stroke-width="1"/></svg>
<svg style="position:absolute;left:784px;top:698px;" width="14" height="14" viewBox="0 0 14 14"><path d="M1 1.5 H6.5 L7 2 L7.5 1.5 H13 V11.5 H7.5 L7 12.5 L6.5 11.5 H1 Z" fill="none" stroke="#666" stroke-width="1"/><path d="M2.5 4 H5.5 M2.5 6 H5.5 M2.5 8 H5.5 M8.5 4 H11.5 M8.5 6 H11.5 M8.5 8 H11.5" stroke="#888" stroke-width="0.8"/></svg>
<svg style="position:absolute;left:820px;top:697px;" width="14" height="15" viewBox="0 0 14 15"><path d="M1 2 H13" stroke="#666" stroke-width="1.4"/><path d="M2 2.5 V8 H12 V2.5" fill="none" stroke="#666" stroke-width="1"/><path d="M7 8 V12.5 M4.5 13 H9.5" stroke="#666" stroke-width="1"/></svg>
<div style="position:absolute;left:851px;top:704px;width:7.7px;height:1.2px;background:#555;"></div>
<div style="position:absolute;left:863.3px;top:704.3px;width:90.6px;height:1px;background:#a0a0a0;"></div>
<div style="position:absolute;left:909.2px;top:701.5px;width:1px;height:6px;background:#a8a8a8;"></div>
<div style="position:absolute;left:887.4px;top:700.6px;width:3.8px;height:9.5px;background:#666;"></div>
<div style="position:absolute;left:958.4px;top:704px;width:7.4px;height:1.2px;background:#555;"></div>
<div style="position:absolute;left:961.5px;top:700.8px;width:1.2px;height:7.5px;background:#555;"></div>
<div id="t55" style="position:absolute;left:978.6px;top:701.25px;font:400 11px/1 'Liberation Sans', sans-serif;color:#444;white-space:nowrap;transform-origin:0 0;transform:scaleX(0.8306);">59%</div>
<svg style="position:absolute;left:1008px;top:698px;" width="14" height="14" viewBox="0 0 14 14"><rect x="1" y="1" width="12" height="12" fill="none" stroke="#8a8a8a" stroke-width="1"/><path d="M3 5 V3 H5 M9 3 H11 V5 M11 9 V11 H9 M5 11 H3 V9" fill="none" stroke="#555" stroke-width="1"/></svg>
<div style="position:absolute;left:1162px;top:95px;width:168px;height:98px;background:linear-gradient(180deg,#e6ef82 0%,#c4e35e 28%,#8ed63a 48%,#a5dc48 62%,#e6ef80 85%,#eef184 100%);"></div>
<div style="position:absolute;left:1166px;top:99px;width:160px;height:89px;background:#c6bfbb;"></div>
<div style="position:absolute;left:1166px;top:99px;width:160px;height:89px;overflow:hidden;background:#c9c1bd;">
<div style="position:absolute;left:0px;top:0px;width:160px;height:89px;background:linear-gradient(90deg,#cdc6c3 0%,#d6d0cd 30%,#dcd6d2 60%,#d4ceca 100%);filter:blur(0px);"></div>
<div style="position:absolute;left:0px;top:0px;width:19px;height:31px;background:linear-gradient(170deg,#2a3a98 0%,#1838b8 40%,#2a48b8 100%);filter:blur(0.6px);"></div>
<div style="position:absolute;left:3px;top:5px;width:14px;height:22px;background:repeating-linear-gradient(100deg,rgba(255,255,255,0) 0 4px,rgba(200,210,240,0.5) 4px 5px);filter:blur(0.7px);"></div>
<div style="position:absolute;left:0px;top:30px;width:19px;height:11px;background:linear-gradient(175deg,#c03048 0%,#b02840 100%);filter:blur(0.6px);"></div>
<div style="position:absolute;left:32.5px;top:0px;width:37px;height:70px;background:linear-gradient(180deg,#e8eaee,#e2e5e8 70%,#dcdee0);filter:blur(0.6px);"></div>
<div style="position:absolute;left:44px;top:4px;width:5px;height:5px;background:#b8c8e0;filter:blur(0.8px);border-radius:50%"></div>
<div style="position:absolute;left:42px;top:17px;width:24px;height:1px;background:#8a9ab8;filter:blur(0.6px);"></div>
<div style="position:absolute;left:43px;top:20px;width:22px;height:1px;background:#8a9ab8;filter:blur(0.6px);"></div>
<div style="position:absolute;left:40px;top:27px;width:5px;height:3px;background:#80b090;filter:blur(0.8px);"></div>
<div style="position:absolute;left:46px;top:28px;width:16px;height:1px;background:#a0a8b8;filter:blur(0.6px);"></div>
<div style="position:absolute;left:44px;top:34px;width:18px;height:1px;background:#a8b0c0;filter:blur(0.6px);"></div>
<div style="position:absolute;left:44px;top:37px;width:18px;height:1px;background:#a8b0c0;filter:blur(0.6px);"></div>
<div style="position:absolute;left:44px;top:40px;width:18px;height:1px;background:#a8b0c0;filter:blur(0.6px);"></div>
<div style="position:absolute;left:70px;top:0px;width:9px;height:41px;background:linear-gradient(90deg,#d88a80,#9a5048 40%,#7a3a34);filter:blur(0.6px);"></div>
<div style="position:absolute;left:114px;top:0px;width:8.5px;height:43px;background:linear-gradient(90deg,#6a3430,#4a2424);filter:blur(0.6px);"></div>
<div style="position:absolute;left:121.5px;top:0px;width:38.5px;height:37.5px;background:#f8f8f8;filter:blur(0.6px);"></div>
<div style="position:absolute;left:155px;top:0px;width:3px;height:35px;background:#e05a6a;filter:blur(0.5px);"></div>
<div style="position:absolute;left:121.5px;top:37px;width:22px;height:22px;background:linear-gradient(180deg,#d8d8de,#c8cace);filter:blur(0.7px);"></div>
<div style="position:absolute;left:126px;top:34px;width:30px;height:4px;background:#a8a0b0;filter:blur(0.8px);"></div>
<div style="position:absolute;left:6px;top:44px;width:36px;height:27px;background:radial-gradient(ellipse at 50% 55%,#2a4420 0%,#3a5a2a 35%,#5a7048 55%,rgba(140,140,120,0) 72%);filter:blur(1px);"></div>
<div style="position:absolute;left:86px;top:30px;width:10px;height:38px;background:radial-gradient(ellipse at 50% 50%,#5a3a38 0%,rgba(150,120,110,0) 70%);filter:blur(1px);"></div>
<div style="position:absolute;left:96px;top:35px;width:18px;height:28px;background:radial-gradient(ellipse at 50% 50%,#4a3a30 0%,#6a5a48 30%,rgba(150,130,110,0) 65%);filter:blur(1px);"></div>
<div style="position:absolute;left:95px;top:57px;width:14px;height:11px;background:#e8d030;filter:blur(0.7px);"></div>
<div style="position:absolute;left:108px;top:60px;width:12px;height:10px;background:#f0f0f0;filter:blur(0.8px);"></div>
<div style="position:absolute;left:94px;top:66px;width:28px;height:23px;background:#2e2424;filter:blur(1px);"></div>
<div style="position:absolute;left:47px;top:52px;width:23px;height:37px;background:#c47060;filter:blur(0.8px);border-radius:25% 25% 0 0"></div>
<div style="position:absolute;left:53px;top:57.5px;width:16px;height:11px;background:#a8c450;filter:blur(0.8px);"></div>
<div style="position:absolute;left:70px;top:47px;width:13px;height:21px;background:radial-gradient(ellipse at 50% 50%,#e8c8b0 0%,#e0b890 35%,#d8b070 55%,rgba(200,160,100,0) 80%);filter:blur(0.7px);"></div>
<div style="position:absolute;left:62px;top:62px;width:28px;height:27px;background:radial-gradient(ellipse at 50% 35%,#eaa4b8 0%,#e098ac 55%,rgba(220,150,160,0) 90%);filter:blur(1px);"></div>
<div style="position:absolute;left:137px;top:40px;width:23px;height:42px;background:linear-gradient(90deg,#b86858,#c87a6a 50%,#b06050);filter:blur(0.8px);border-radius:30% 30% 0 0"></div>
<div style="position:absolute;left:144px;top:68px;width:14px;height:10px;background:#901830;filter:blur(0.9px);"></div>
<div style="position:absolute;left:123px;top:55px;width:17px;height:13px;background:#4a3430;filter:blur(0.8px);border-radius:50% 50% 30% 30%"></div>
<div style="position:absolute;left:125px;top:60px;width:13px;height:17px;background:#d8b0a0;filter:blur(0.8px);border-radius:40%"></div>
<div style="position:absolute;left:115px;top:69px;width:33px;height:20px;background:radial-gradient(ellipse at 50% 40%,#141212 0%,#1a1818 25%,#7a6a90 45%,#8a7aa0 70%,rgba(130,110,140,0) 95%);filter:blur(0.8px);"></div>
<div style="position:absolute;left:147px;top:79px;width:13px;height:10px;background:#e8e4e6;filter:blur(0.8px);"></div>
<div style="position:absolute;left:0px;top:71px;width:50px;height:18px;background:linear-gradient(180deg,#9a908c,#7a6e6a);filter:blur(1px);"></div>
<div style="position:absolute;left:84px;top:82px;width:34px;height:7px;background:#a84840;filter:blur(1px);"></div>
</div>
<div style="position:absolute;left:1166px;top:170px;width:95px;height:18.3px;background:rgba(35,35,35,0.55);"></div>
<div id="t56" style="position:absolute;left:1170.4px;top:173.38px;font:400 12.5px/1 'Liberation Sans', sans-serif;color:#fff;white-space:nowrap;transform-origin:0 0;transform:scaleX(1.0437);">Mirela i Sabina</div>
<div style="position:absolute;left:1166px;top:195px;width:160px;height:90px;background:#232323;"></div>
<div style="position:absolute;left:1166px;top:291px;width:160px;height:90px;background:#232323;"></div>
<div style="position:absolute;left:1166px;top:387px;width:160px;height:90px;background:#232323;"></div>
<div style="position:absolute;left:1166px;top:483px;width:160px;height:90px;background:#232323;"></div>
<div style="position:absolute;left:1166px;top:579px;width:160px;height:90px;background:#232323;"></div>
<div id="t57" style="position:absolute;left:1180px;top:232.25px;font:700 15px/1 'Liberation Sans', sans-serif;color:#f4f4f4;white-space:nowrap;transform-origin:0 0;">Amela&nbsp; Hadžimej...</div>
<div style="position:absolute;left:1166.6px;top:265.6px;width:17.4px;height:19.2px;background:#2d2d2d;"></div>
<svg style="position:absolute;left:1166.2px;top:265.40000000000003px;" width="19" height="19" viewBox="0 0 19 19"><path d="M7 3.2 Q9.8 2.6 12.4 3.2 Q13.2 8 12.8 10 Q12.8 13.6 10.6 14.2 H9.2 Q7.2 13.6 7 10.5 Q6.6 6 7 3.2 Z" fill="#f05656"/><rect x="7" y="14.5" width="5.8" height="1.4" rx="0.6" fill="#f05656"/><path d="M3.4 16.4 L16.8 3.2" stroke="#333" stroke-width="2.1" opacity="0.8"/><path d="M3.4 16.4 L16.8 3.2" stroke="#f05656" stroke-width="1.4" stroke-linecap="round"/></svg>
<div style="position:absolute;left:1185px;top:291px;width:1px;height:90px;background:#151515;"></div>
<div style="position:absolute;left:1186px;top:291px;width:120px;height:90px;overflow:hidden;background:#ecebe0;">
<div style="position:absolute;left:0px;top:0px;width:120px;height:90px;background:linear-gradient(90deg,#dcdab8 0%,#e6e4c8 12%,#ecead2 20%,#e4e2c6 26%,#f0eedc 34%,#f4f2e6 55%,#f8f8f2 80%,#f4f4ee 100%);filter:blur(0px);"></div>
<div style="position:absolute;left:-2px;top:0px;width:110px;height:17px;background:linear-gradient(180deg,#fafaf8,#f4f4f0);filter:blur(1.2px);"></div>
<div style="position:absolute;left:0px;top:0px;width:20px;height:90px;background:linear-gradient(90deg,#e0dec0,#e8e6cc);filter:blur(1px);"></div>
<div style="position:absolute;left:33px;top:17px;width:14px;height:55px;background:#f2f0de;filter:blur(1.2px);"></div>
<div style="position:absolute;left:102px;top:0px;width:18px;height:90px;background:linear-gradient(90deg,#b4aca4,#a8a098 50%,#9c948c);filter:blur(0.7px);clip-path:polygon(8% 0,100% 0,100% 100%,0 100%)"></div>
<div style="position:absolute;left:0px;top:28px;width:11px;height:16px;background:linear-gradient(180deg,#4a80c0 0%,#5a9a68 55%,#4a7a38 100%);filter:blur(0.7px);transform:skewY(8deg)"></div>
<div style="position:absolute;left:12px;top:45px;width:13px;height:22px;background:#283048;filter:blur(1px);border-radius:40% 40% 20% 20%"></div>
<div style="position:absolute;left:18px;top:41px;width:4px;height:5px;background:#5a5a50;filter:blur(0.7px);"></div>
<div style="position:absolute;left:31.5px;top:37px;width:8.5px;height:9px;background:#363430;filter:blur(0.7px);"></div>
<div style="position:absolute;left:69.6px;top:34.5px;width:19.5px;height:20.5px;background:#f4f4f4;filter:blur(1px);border:1px solid #d8d8d8;box-sizing:border-box"></div>
<div style="position:absolute;left:78px;top:40px;width:8px;height:6px;background:#b0c0ec;filter:blur(0.8px);"></div>
<div style="position:absolute;left:0px;top:63px;width:30px;height:27px;background:#7e7e86;filter:blur(1.2px);border-radius:10% 30% 0 0"></div>
<div style="position:absolute;left:30px;top:62px;width:44px;height:28px;background:radial-gradient(ellipse at 50% 30%,#f4f4f4 0%,#eeeeee 45%,#dcdcdc 70%,rgba(220,220,220,0) 95%);filter:blur(1.2px);"></div>
<div style="position:absolute;left:45px;top:40px;width:15px;height:11px;background:#2e2624;filter:blur(1px);border-radius:50% 50% 20% 20%"></div>
<div style="position:absolute;left:46px;top:46px;width:13px;height:20px;background:#c8a08e;filter:blur(1px);border-radius:30% 30% 45% 45%"></div>
<div style="position:absolute;left:32px;top:57px;width:17px;height:8px;background:#c09480;filter:blur(1.2px);border-radius:40%"></div>
<div style="position:absolute;left:55px;top:66px;width:7px;height:24px;background:#4a4048;filter:blur(1px);"></div>
<div style="position:absolute;left:91px;top:66px;width:19px;height:24px;background:#8c5a40;filter:blur(1px);"></div>
<div style="position:absolute;left:88px;top:70px;width:11px;height:20px;background:#e8c8ac;filter:blur(1.2px);border-radius:40% 40% 0 0"></div>
</div>
<div style="position:absolute;left:1166px;top:361.4px;width:108px;height:19.5px;background:rgba(45,45,45,0.75);"></div>
<svg style="position:absolute;left:1166.2px;top:361.40000000000003px;" width="19" height="19" viewBox="0 0 19 19"><path d="M7 3.2 Q9.8 2.6 12.4 3.2 Q13.2 8 12.8 10 Q12.8 13.6 10.6 14.2 H9.2 Q7.2 13.6 7 10.5 Q6.6 6 7 3.2 Z" fill="#f05656"/><rect x="7" y="14.5" width="5.8" height="1.4" rx="0.6" fill="#f05656"/><path d="M3.4 16.4 L16.8 3.2" stroke="#333" stroke-width="2.1" opacity="0.8"/><path d="M3.4 16.4 L16.8 3.2" stroke="#f05656" stroke-width="1.4" stroke-linecap="round"/></svg>
<div id="t58" style="position:absolute;left:1188.2px;top:365.27px;font:400 12.5px/1 'Liberation Sans', sans-serif;color:#fff;white-space:nowrap;transform-origin:0 0;transform:scaleX(1.0226);">Esmin Brodlija</div>
<div style="position:absolute;left:1166px;top:387px;width:160px;height:90px;overflow:hidden;background:#e0e0dc;">
<div style="position:absolute;left:0px;top:0px;width:160px;height:90px;background:linear-gradient(90deg,#e6e6e4 0%,#e8e8e6 40%,#e2e2de 70%,#d8d6ce 100%);filter:blur(0px);"></div>
<div style="position:absolute;left:0px;top:0px;width:110px;height:25px;background:linear-gradient(180deg,#5e625e,#6a6e68);filter:blur(0.6px);"></div>
<div style="position:absolute;left:0px;top:0px;width:30px;height:25px;background:linear-gradient(155deg,#7a7e7a 0%,#9a9e9a 35%,#6a6e6a 60%);filter:blur(1px);"></div>
<div style="position:absolute;left:36px;top:0px;width:16px;height:17px;background:#e8e8e6;filter:blur(1px);"></div>
<div style="position:absolute;left:70px;top:1px;width:30px;height:12px;background:#5a5e5a;filter:blur(1.5px);"></div>
<div style="position:absolute;left:0px;top:22px;width:110px;height:3px;background:#a47848;filter:blur(0.5px);"></div>
<div style="position:absolute;left:106px;top:0px;width:4px;height:25px;background:#a47848;filter:blur(0.5px);"></div>
<div style="position:absolute;left:54px;top:19px;width:47px;height:50px;background:#3c2c26;filter:blur(1.5px);border-radius:50% 50% 40% 40%"></div>
<div style="position:absolute;left:61px;top:30px;width:34px;height:40px;background:#e0b8a4;filter:blur(1.2px);border-radius:45% 45% 50% 50%"></div>
<div style="position:absolute;left:68px;top:40px;width:8px;height:2px;background:#8a6050;filter:blur(0.8px);"></div>
<div style="position:absolute;left:81px;top:40px;width:8px;height:2px;background:#8a6050;filter:blur(0.8px);"></div>
<div style="position:absolute;left:70px;top:62px;width:24px;height:12px;background:#e8c4b0;filter:blur(1px);border-radius:40%"></div>
<div style="position:absolute;left:48px;top:72px;width:86px;height:20px;background:#1c1818;filter:blur(1.5px);border-radius:45% 45% 0 0"></div>
</div>
<div style="position:absolute;left:1166px;top:457.4px;width:111.5px;height:19.7px;background:rgba(45,45,45,0.75);"></div>
<svg style="position:absolute;left:1166.2px;top:457.40000000000003px;" width="19" height="19" viewBox="0 0 19 19"><path d="M7 3.2 Q9.8 2.6 12.4 3.2 Q13.2 8 12.8 10 Q12.8 13.6 10.6 14.2 H9.2 Q7.2 13.6 7 10.5 Q6.6 6 7 3.2 Z" fill="#f05656"/><rect x="7" y="14.5" width="5.8" height="1.4" rx="0.6" fill="#f05656"/><path d="M3.4 16.4 L16.8 3.2" stroke="#333" stroke-width="2.1" opacity="0.8"/><path d="M3.4 16.4 L16.8 3.2" stroke="#f05656" stroke-width="1.4" stroke-linecap="round"/></svg>
<div id="t59" style="position:absolute;left:1188.2px;top:461.50px;font:400 12px/1 'Liberation Sans', sans-serif;color:#fff;white-space:nowrap;transform-origin:0 0;transform:scaleX(1.0407);">Edna Dragun...</div>
<div id="t60" style="position:absolute;left:1205.2px;top:520.45px;font:700 15px/1 'Liberation Sans', sans-serif;color:#f4f4f4;white-space:nowrap;transform-origin:0 0;transform:scaleX(0.9863);">Amra Džino</div>
<div style="position:absolute;left:1166.6px;top:553.6px;width:17.4px;height:19.2px;background:#2d2d2d;"></div>
<svg style="position:absolute;left:1166.2px;top:553.4px;" width="19" height="19" viewBox="0 0 19 19"><path d="M7 3.2 Q9.8 2.6 12.4 3.2 Q13.2 8 12.8 10 Q12.8 13.6 10.6 14.2 H9.2 Q7.2 13.6 7 10.5 Q6.6 6 7 3.2 Z" fill="#f05656"/><rect x="7" y="14.5" width="5.8" height="1.4" rx="0.6" fill="#f05656"/><path d="M3.4 16.4 L16.8 3.2" stroke="#333" stroke-width="2.1" opacity="0.8"/><path d="M3.4 16.4 L16.8 3.2" stroke="#f05656" stroke-width="1.4" stroke-linecap="round"/></svg>
<div style="position:absolute;left:1166px;top:579px;width:160px;height:90px;background:#000;"></div>
<div style="position:absolute;left:1186px;top:579px;width:120px;height:90px;overflow:hidden;background:#dcdae0;">
<div style="position:absolute;left:0px;top:0px;width:120px;height:90px;background:linear-gradient(90deg,#d8d6dc 0%,#dad8de 52%,#e2e0e6 55%,#e8e6ec 68%,#f2f2f4 72%,#f6f6f8 100%);filter:blur(0px);"></div>
<div style="position:absolute;left:0px;top:0px;width:65px;height:7px;background:#e4e2e8;filter:blur(0.8px);"></div>
<div style="position:absolute;left:0px;top:11px;width:26.5px;height:33px;background:#ecebe6;filter:blur(0.5px);"></div>
<div style="position:absolute;left:2px;top:13px;width:22px;height:28px;background:linear-gradient(135deg,#e6e2d6,#d6d0c0 50%,#e2ddd0);filter:blur(0.6px);"></div>
<div style="position:absolute;left:7px;top:18px;width:12px;height:16px;background:radial-gradient(ellipse,#7a7060 0%,#a09a88 30%,rgba(200,190,170,0) 70%);filter:blur(0.9px);"></div>
<div style="position:absolute;left:0px;top:44px;width:12px;height:46px;background:#d0ced4;filter:blur(0.6px);"></div>
<div style="position:absolute;left:12px;top:44px;width:53.5px;height:46px;background:#1e1616;filter:blur(0.6px);"></div>
<div style="position:absolute;left:21px;top:59px;width:11px;height:14px;background:#9aa4a2;filter:blur(0.6px);"></div>
<div style="position:absolute;left:47px;top:59px;width:11px;height:14px;background:#9aa4a2;filter:blur(0.6px);"></div>
<div style="position:absolute;left:37.5px;top:55px;width:0.9px;height:6px;background:#d8d8d8;filter:blur(0.3px);"></div>
<div style="position:absolute;left:40px;top:55px;width:0.9px;height:6px;background:#d8d8d8;filter:blur(0.3px);"></div>
<div style="position:absolute;left:30px;top:36px;width:16px;height:7.5px;background:#3a88d0;filter:blur(0.6px);"></div>
<div style="position:absolute;left:29px;top:42.5px;width:18px;height:2.5px;background:#d03a3a;filter:blur(0.5px);"></div>
<div style="position:absolute;left:62px;top:27px;width:4px;height:17px;background:#5a9ad8;filter:blur(0.5px);"></div>
<div style="position:absolute;left:46px;top:41px;width:16px;height:3px;background:#f2f2f2;filter:blur(0.6px);"></div>
<div style="position:absolute;left:82px;top:0px;width:22px;height:90px;background:linear-gradient(90deg,#f0f0f2,#f8f8fa);filter:blur(0.6px);"></div>
<div style="position:absolute;left:104px;top:0px;width:16px;height:90px;background:linear-gradient(90deg,#e8eaee,#f4f6f8);filter:blur(0.5px);"></div>
<div style="position:absolute;left:106.5px;top:0px;width:1.5px;height:90px;background:repeating-linear-gradient(180deg,#dcdee2 0 5px,#8a949c 5px 7px);filter:blur(0.6px);"></div>
<div style="position:absolute;left:110px;top:25px;width:10px;height:65px;background:#eaf0f6;filter:blur(0.7px);"></div>
<div style="position:absolute;left:110px;top:20px;width:10px;height:6px;background:#d0d4da;filter:blur(0.7px);"></div>
</div>
<div style="position:absolute;left:1166px;top:649.3px;width:111.5px;height:19.7px;background:rgba(45,45,45,0.75);"></div>
<svg style="position:absolute;left:1166.2px;top:649.4px;" width="19" height="19" viewBox="0 0 19 19"><path d="M7 3.2 Q9.8 2.6 12.4 3.2 Q13.2 8 12.8 10 Q12.8 13.6 10.6 14.2 H9.2 Q7.2 13.6 7 10.5 Q6.6 6 7 3.2 Z" fill="#f05656"/><rect x="7" y="14.5" width="5.8" height="1.4" rx="0.6" fill="#f05656"/><path d="M3.4 16.4 L16.8 3.2" stroke="#333" stroke-width="2.1" opacity="0.8"/><path d="M3.4 16.4 L16.8 3.2" stroke="#f05656" stroke-width="1.4" stroke-linecap="round"/></svg>
<div id="t61" style="position:absolute;left:1188.2px;top:653.38px;font:400 12.5px/1 'Liberation Sans', sans-serif;color:#fff;white-space:nowrap;transform-origin:0 0;transform:scaleX(0.9717);">Centar za so...</div>
</body></html>
